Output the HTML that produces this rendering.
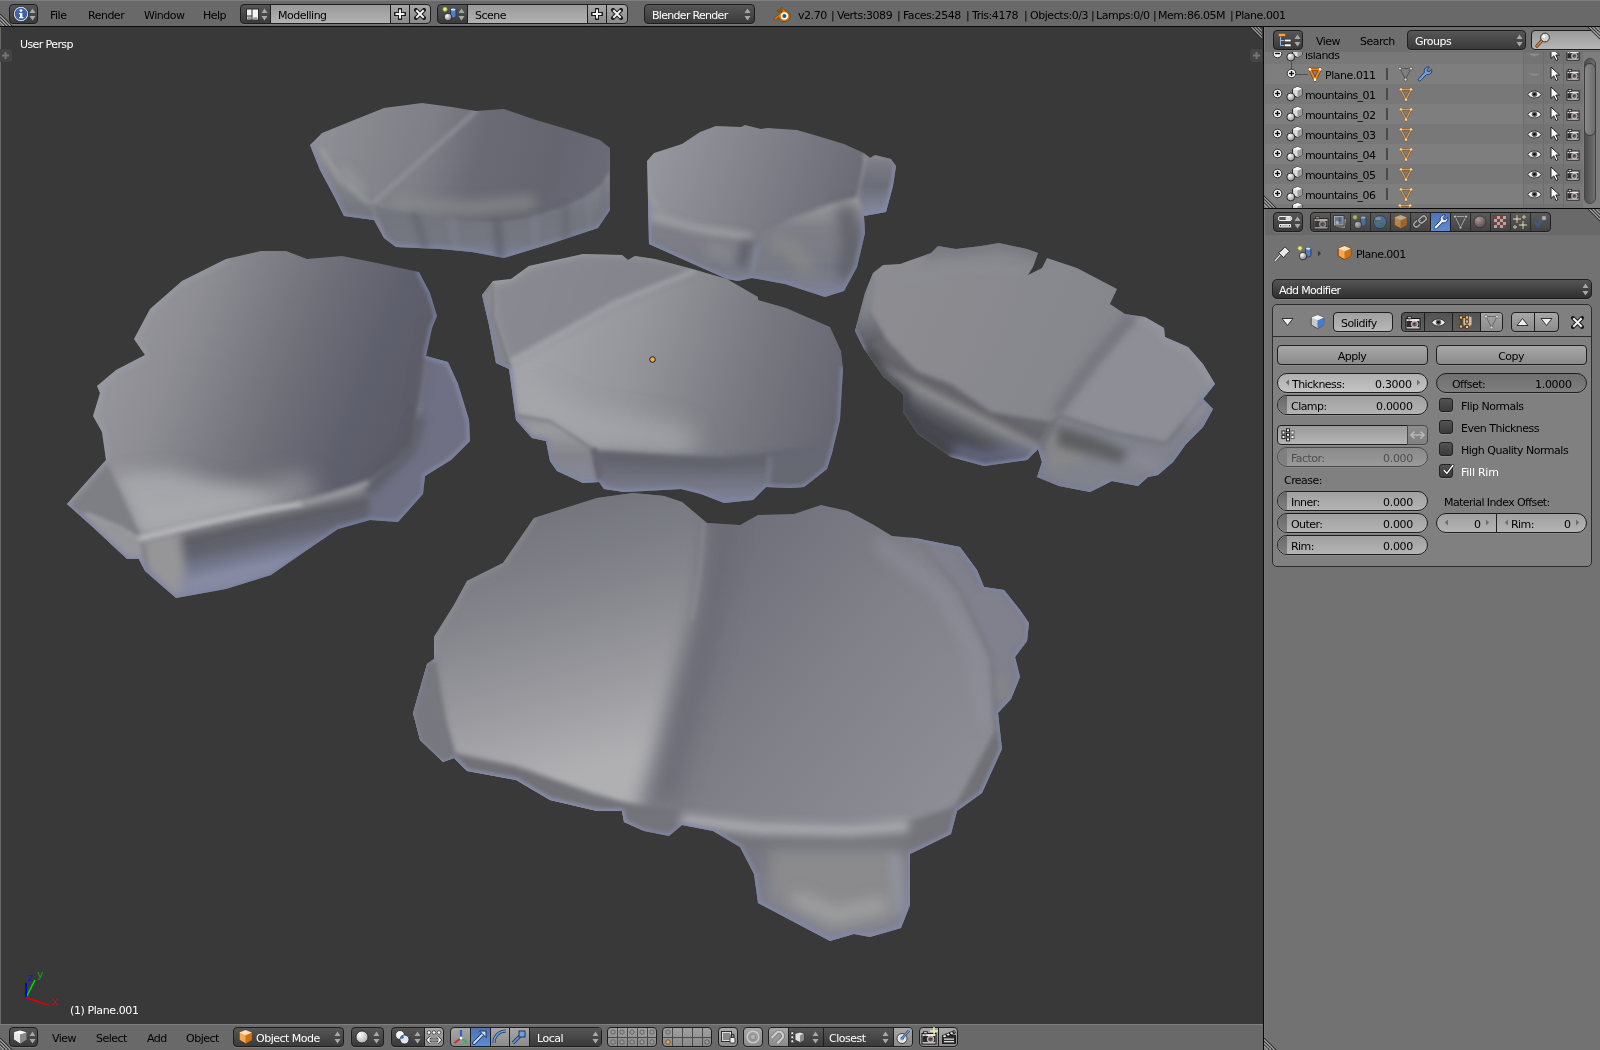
<!DOCTYPE html>
<html><head><meta charset="utf-8"><title>Blender</title>
<style>
html,body{margin:0;padding:0;}
body{width:1600px;height:1050px;overflow:hidden;background:#727272;position:relative;font-family:"DejaVu Sans","Liberation Sans",sans-serif;font-size:11px;color:#000;line-height:13px;}
div,span,svg{position:absolute;box-sizing:border-box;}
.t{white-space:nowrap;height:13px;will-change:transform;}
.w{color:#fff;}
.hdr{background:#696969;}
.btn{border:1px solid #1e1e1e;border-radius:4px;}
.dk{background:linear-gradient(#565656,#3a3a3a);}
.lt{background:linear-gradient(#a7a7a7,#8b8b8b);}
.tx{background:linear-gradient(#999999,#b2b2b2);}
.num{background:linear-gradient(#a0a0a0,#b4b4b4);border-radius:10px;}
.sel{background:linear-gradient(#4f4f4f,#5e5e5e);}
.blue{background:linear-gradient(#4d73ae,#5d8ad1);}
.chk{border:1px solid #222;border-radius:3px;background:linear-gradient(#535353,#3b3b3b);width:14px;height:14px;}
.emb{box-shadow:0 1px 0 rgba(255,255,255,0.10);}
.sep{background:#1e1e1e;width:1px;}
</style></head>
<body>
<svg style="left:0;top:27px" width="1263" height="997" viewBox="0 27 1263 997">
<defs>
<linearGradient id="g1s" gradientUnits="userSpaceOnUse" x1="0" y1="150" x2="0" y2="258"><stop offset="0" stop-color="#8e8f94"/><stop offset="0.32" stop-color="#80818a"/><stop offset="0.6" stop-color="#737580"/><stop offset="0.83" stop-color="#737682"/><stop offset="1" stop-color="#7c829c"/></linearGradient>
<linearGradient id="g1t" gradientUnits="userSpaceOnUse" x1="320" y1="100" x2="612" y2="180"><stop offset="0" stop-color="#90909a"/><stop offset="0.2" stop-color="#86878f"/><stop offset="0.38" stop-color="#7e7f89"/><stop offset="0.55" stop-color="#6a6b77"/><stop offset="0.8" stop-color="#646571"/><stop offset="1" stop-color="#6a6b7a"/></linearGradient>
<clipPath id="c1"><polygon points="310,145 322,133 354,120 384,108 422,103 452,107 476,111 504,109 536,120 570,130 600,140 610,148 610,210 598,228 550,244 504,258 472,252 440,249 396,247 384,238 374,220 344,216 334,196 320,170"/></clipPath>
<linearGradient id="g2s" gradientUnits="userSpaceOnUse" x1="0" y1="200" x2="0" y2="297"><stop offset="0" stop-color="#9c9da2"/><stop offset="0.3" stop-color="#7e7f89"/><stop offset="0.7" stop-color="#787a87"/><stop offset="1" stop-color="#7e829c"/></linearGradient>
<linearGradient id="g2b" gradientUnits="userSpaceOnUse" x1="0" y1="158" x2="0" y2="214"><stop offset="0" stop-color="#7e7f8a"/><stop offset="0.5" stop-color="#6b6d79"/><stop offset="1" stop-color="#858aa5"/></linearGradient>
<linearGradient id="g2t" gradientUnits="userSpaceOnUse" x1="647" y1="120" x2="870" y2="200"><stop offset="0" stop-color="#9a9ba3"/><stop offset="0.4" stop-color="#858690"/><stop offset="1" stop-color="#676874"/></linearGradient>
<clipPath id="c2"><polygon points="647,161 654,153 682,144 700,132 716,126 741,127 745,125 761,129 767,128 797,130 821,137 844,144 864,153 870,158 875,155 891,159 896,166 893,186 886,212 864,216 865,233 857,267 844,291 825,297 785,284 758,279 752,278 738,281 727,279 700,267 649,244 648,200"/></clipPath>
<linearGradient id="g3t" gradientUnits="userSpaceOnUse" x1="130" y1="300" x2="440" y2="420"><stop offset="0" stop-color="#96969d"/><stop offset="0.2" stop-color="#8c8c93"/><stop offset="0.3" stop-color="#83848d"/><stop offset="0.45" stop-color="#757680"/><stop offset="0.57" stop-color="#6b6c77"/><stop offset="0.75" stop-color="#5f6070"/><stop offset="1" stop-color="#585966"/></linearGradient>
<linearGradient id="g3s" gradientUnits="userSpaceOnUse" x1="200" y1="522" x2="212" y2="576"><stop offset="0" stop-color="#96969b"/><stop offset="0.28" stop-color="#5c5d67"/><stop offset="0.55" stop-color="#626473"/><stop offset="0.85" stop-color="#777c98"/><stop offset="1" stop-color="#858aa8"/></linearGradient>
<clipPath id="c3"><polygon points="67,504 106,460 102,432 93,416 100,393 97,386 116,370 145,355 134,339 150,309 182,281 226,259 261,251 286,251 307,259 342,256 377,263 419,272 430,293 437,316 432,328 426,356 448,362 458,384 469,420 470,441 451,460 425,476 423,494 398,522 370,520 338,529 307,550 271,575 226,589 176,598 145,571 139,559 127,559 95,529"/></clipPath>
<linearGradient id="g4t" gradientUnits="userSpaceOnUse" x1="500" y1="300" x2="845" y2="400"><stop offset="0" stop-color="#a9a9ae"/><stop offset="0.4" stop-color="#95969d"/><stop offset="0.75" stop-color="#767781"/><stop offset="1" stop-color="#656672"/></linearGradient>
<linearGradient id="g4l" gradientUnits="userSpaceOnUse" x1="0" y1="290" x2="0" y2="485"><stop offset="0" stop-color="#8c8c92"/><stop offset="0.45" stop-color="#828288"/><stop offset="0.62" stop-color="#8a8a90"/><stop offset="0.72" stop-color="#9a9aa0"/><stop offset="0.85" stop-color="#83848d"/><stop offset="1" stop-color="#868a9f"/></linearGradient>
<linearGradient id="g4s" gradientUnits="userSpaceOnUse" x1="0" y1="440" x2="0" y2="503"><stop offset="0" stop-color="#636470"/><stop offset="0.5" stop-color="#6b6d7a"/><stop offset="1" stop-color="#8085a0"/></linearGradient>
<clipPath id="c4"><polygon points="482,295 493,281 511,279 529,266 583,254 622,255 628,260 635,256 655,259 696,270 727,279 758,297 758,300 786,308 830,327 841,351 843,369 840,420 832,453 827,469 804,487 791,488 766,487 753,500 724,503 701,494 681,489 645,491 624,492 604,489 599,482 583,483 557,471 550,461 546,441 532,438 516,420 509,369 496,363 489,325"/></clipPath>
<linearGradient id="g5t" gradientUnits="userSpaceOnUse" x1="860" y1="260" x2="1215" y2="420"><stop offset="0" stop-color="#8d8d93"/><stop offset="0.3" stop-color="#8a8a90"/><stop offset="0.7" stop-color="#85868e"/><stop offset="1" stop-color="#8b8c98"/></linearGradient>
<linearGradient id="g5s" gradientUnits="userSpaceOnUse" x1="951" y1="384" x2="931" y2="424"><stop offset="0" stop-color="#68686e"/><stop offset="0.2" stop-color="#636369"/><stop offset="0.42" stop-color="#8c8c8f"/><stop offset="0.6" stop-color="#6e6f77"/><stop offset="0.8" stop-color="#56575f"/><stop offset="1" stop-color="#494a54"/></linearGradient>
<linearGradient id="g5l" gradientUnits="userSpaceOnUse" x1="0" y1="275" x2="0" y2="345"><stop offset="0" stop-color="#8e8f9a"/><stop offset="0.5" stop-color="#83848f"/><stop offset="0.85" stop-color="#666770"/><stop offset="1" stop-color="#5c5d66"/></linearGradient>
<clipPath id="c5"><polygon points="855,331 865,293 873,273 883,265 900,264 931,253 938,246 956,249 981,246 999,243 1027,249 1038,253 1033,267 1028,275 1042,268 1047,258 1077,268 1117,289 1110,304 1125,314 1145,317 1164,328 1165,337 1188,347 1203,364 1215,384 1203,399 1213,409 1203,427 1186,444 1173,462 1158,475 1148,477 1138,486 1112,481 1090,492 1059,486 1037,477 1042,462 1038,449 1027,460 984,466 951,457 918,434 903,412 903,394 883,376 864,349"/></clipPath>
<linearGradient id="g6t" gradientUnits="userSpaceOnUse" x1="700" y1="540" x2="980" y2="760"><stop offset="0" stop-color="#6c6d79"/><stop offset="0.5" stop-color="#7f808a"/><stop offset="1" stop-color="#8c8d97"/></linearGradient>
<linearGradient id="g6l" gradientUnits="userSpaceOnUse" x1="540" y1="500" x2="620" y2="790"><stop offset="0" stop-color="#72737d"/><stop offset="0.3" stop-color="#82838c"/><stop offset="0.6" stop-color="#97979d"/><stop offset="0.9" stop-color="#b0b0b4"/><stop offset="1" stop-color="#b0b0b4"/></linearGradient>
<linearGradient id="g6s" gradientUnits="userSpaceOnUse" x1="0" y1="770" x2="0" y2="941"><stop offset="0" stop-color="#707076"/><stop offset="0.4" stop-color="#74757d"/><stop offset="1" stop-color="#80839a"/></linearGradient>
<clipPath id="c6"><polygon points="413,713 427,664 434,659 434,637 454,605 467,581 503,563 534,518 597,498 633,493 664,496 682,502 707,523 740,525 758,515 794,514 821,505 848,511 874,525 892,536 915,538 960,547 977,570 984,587 1004,590 1020,610 1029,623 1027,641 1015,657 1020,677 1011,699 998,713 1002,749 982,793 957,811 951,834 910,854 910,905 901,928 870,937 854,934 830,941 758,903 754,874 740,847 713,831 682,825 669,836 644,831 624,822 622,811 597,811 550,800 516,780 467,771 454,758 443,762 420,740"/></clipPath>
<filter id="b1_5" filterUnits="userSpaceOnUse" x="0" y="27" width="1263" height="997"><feGaussianBlur stdDeviation="1.5"/></filter>
<filter id="b2" filterUnits="userSpaceOnUse" x="0" y="27" width="1263" height="997"><feGaussianBlur stdDeviation="2"/></filter>
<filter id="b2_5" filterUnits="userSpaceOnUse" x="0" y="27" width="1263" height="997"><feGaussianBlur stdDeviation="2.5"/></filter>
<filter id="b3" filterUnits="userSpaceOnUse" x="0" y="27" width="1263" height="997"><feGaussianBlur stdDeviation="3"/></filter>
<filter id="b3_5" filterUnits="userSpaceOnUse" x="0" y="27" width="1263" height="997"><feGaussianBlur stdDeviation="3.5"/></filter>
<filter id="b4" filterUnits="userSpaceOnUse" x="0" y="27" width="1263" height="997"><feGaussianBlur stdDeviation="4"/></filter>
<filter id="b4_5" filterUnits="userSpaceOnUse" x="0" y="27" width="1263" height="997"><feGaussianBlur stdDeviation="4.5"/></filter>
<filter id="b5" filterUnits="userSpaceOnUse" x="0" y="27" width="1263" height="997"><feGaussianBlur stdDeviation="5"/></filter>
<filter id="b6" filterUnits="userSpaceOnUse" x="0" y="27" width="1263" height="997"><feGaussianBlur stdDeviation="6"/></filter>
<filter id="b7" filterUnits="userSpaceOnUse" x="0" y="27" width="1263" height="997"><feGaussianBlur stdDeviation="7"/></filter>
<filter id="b9" filterUnits="userSpaceOnUse" x="0" y="27" width="1263" height="997"><feGaussianBlur stdDeviation="9"/></filter>
<filter id="b10" filterUnits="userSpaceOnUse" x="0" y="27" width="1263" height="997"><feGaussianBlur stdDeviation="10"/></filter>
<filter id="b12" filterUnits="userSpaceOnUse" x="0" y="27" width="1263" height="997"><feGaussianBlur stdDeviation="12"/></filter>
<filter id="desat" filterUnits="userSpaceOnUse" x="0" y="27" width="1263" height="997" color-interpolation-filters="sRGB"><feColorMatrix type="saturate" values="0.8"/></filter>
</defs>
<rect x="0" y="27" width="1263" height="997" fill="#393939"/>
<rect x="0" y="27" width="1" height="997" fill="#686868"/>
<g filter="url(#desat)">
<polygon points="310,145 322,133 354,120 384,108 422,103 452,107 476,111 504,109 536,120 570,130 600,140 610,148 610,210 598,228 550,244 504,258 472,252 440,249 396,247 384,238 374,220 344,216 334,196 320,170" fill="url(#g1t)"/>
<g clip-path="url(#c1)"><polyline points="476,111 372,204" fill="none" stroke="#94959c" stroke-width="4" stroke-linejoin="round" stroke-linecap="round" filter="url(#b2)" opacity="0.85"/><polyline points="345,172 360,190" fill="none" stroke="#9a9a9e" stroke-width="12" stroke-linejoin="round" stroke-linecap="round" filter="url(#b5)" opacity="0.6"/><polyline points="400,203 470,208 530,202" fill="none" stroke="#88888c" stroke-width="14" stroke-linejoin="round" stroke-linecap="round" filter="url(#b6)" opacity="0.8"/><polygon points="610,148 610,210 598,228 550,244 504,258 472,252 440,249 396,247 384,238 374,220 344,216 334,196 320,170 310,145 324,155 335,170 350,188 370,204 400,211 440,218 470,221 500,222 530,217 560,208 585,197 602,184 611,168" fill="url(#g1s)" filter="url(#b1_5)" /><polyline points="610,210 598,228 550,244 504,258 472,252 440,249 396,247 384,238 374,220 344,216 334,196 320,170 310,145" fill="none" stroke="#7f88b6" stroke-width="5" stroke-linejoin="round" stroke-linecap="round" filter="url(#b2)" opacity="0.8"/><polyline points="415,215 425,247" fill="none" stroke="#5e606c" stroke-width="7" stroke-linejoin="round" stroke-linecap="round" filter="url(#b3)" opacity="0.6"/><polyline points="452,220 456,250" fill="none" stroke="#7f8291" stroke-width="8" stroke-linejoin="round" stroke-linecap="round" filter="url(#b3)" opacity="0.6"/><polyline points="497,223 500,255" fill="none" stroke="#5c5e6a" stroke-width="8" stroke-linejoin="round" stroke-linecap="round" filter="url(#b3)" opacity="0.7"/><polyline points="535,217 535,247" fill="none" stroke="#7f8291" stroke-width="7" stroke-linejoin="round" stroke-linecap="round" filter="url(#b3)" opacity="0.6"/><polyline points="565,207 566,240" fill="none" stroke="#5e606c" stroke-width="6" stroke-linejoin="round" stroke-linecap="round" filter="url(#b3)" opacity="0.6"/><polyline points="588,196 590,232" fill="none" stroke="#7f8291" stroke-width="5" stroke-linejoin="round" stroke-linecap="round" filter="url(#b2_5)" opacity="0.5"/><polyline points="604,184 604,222" fill="none" stroke="#686a7c" stroke-width="5" stroke-linejoin="round" stroke-linecap="round" filter="url(#b2_5)" opacity="0.5"/><polyline points="372,206 384,238" fill="none" stroke="#8c8d92" stroke-width="4" stroke-linejoin="round" stroke-linecap="round" filter="url(#b2)" opacity="0.6"/><polyline points="322,150 340,180 368,203" fill="none" stroke="#a0a0a3" stroke-width="4" stroke-linejoin="round" stroke-linecap="round" filter="url(#b2_5)" opacity="0.8"/></g>
<polygon points="647,161 654,153 682,144 700,132 716,126 741,127 745,125 761,129 767,128 797,130 821,137 844,144 864,153 870,158 875,155 891,159 896,166 893,186 886,212 864,216 865,233 857,267 844,291 825,297 785,284 758,279 752,278 738,281 727,279 700,267 649,244 648,200" fill="url(#g2t)"/>
<g clip-path="url(#c2)"><polygon points="864,153 870,158 875,155 891,159 896,166 893,186 886,212 864,216 865,233 857,267 844,291 825,297 785,284 758,279 752,278 738,281 727,279 700,267 649,244 648,200 647,161 651,195 665,212 694,226 730,229 765,231 794,217 830,204 857,197 860,186 864,164" fill="url(#g2s)" filter="url(#b2)" /><polygon points="866,156 891,159 896,166 886,212 864,216 858,196" fill="url(#g2b)" filter="url(#b2)" /><polyline points="846,212 852,240 846,272" fill="none" stroke="#5d5e69" stroke-width="18" stroke-linejoin="round" stroke-linecap="round" filter="url(#b7)" opacity="0.9"/><polyline points="710,248 728,256" fill="none" stroke="#8e8e94" stroke-width="12" stroke-linejoin="round" stroke-linecap="round" filter="url(#b6)" opacity="0.7"/><polyline points="748,238 742,262" fill="none" stroke="#5a5b66" stroke-width="9" stroke-linejoin="round" stroke-linecap="round" filter="url(#b4)" opacity="0.9"/><polyline points="758,246 752,272" fill="none" stroke="#828aa6" stroke-width="4" stroke-linejoin="round" stroke-linecap="round" filter="url(#b2)" opacity="0.7"/><polyline points="778,242 796,252 806,266" fill="none" stroke="#8a8a88" stroke-width="16" stroke-linejoin="round" stroke-linecap="round" filter="url(#b7)" opacity="0.8"/><polyline points="652,216 697,229 750,236" fill="none" stroke="#a4a4a8" stroke-width="7" stroke-linejoin="round" stroke-linecap="round" filter="url(#b3_5)" opacity="0.9"/><polyline points="896,166 893,186 886,212 864,216 865,233 857,267 844,291 825,297 785,284 758,279 752,278 738,281 727,279 700,267 649,244 648,200" fill="none" stroke="#7f88b6" stroke-width="5" stroke-linejoin="round" stroke-linecap="round" filter="url(#b2)" opacity="0.8"/></g>
<polygon points="67,504 106,460 102,432 93,416 100,393 97,386 116,370 145,355 134,339 150,309 182,281 226,259 261,251 286,251 307,259 342,256 377,263 419,272 430,293 437,316 432,328 426,356 448,362 458,384 469,420 470,441 451,460 425,476 423,494 398,522 370,520 338,529 307,550 271,575 226,589 176,598 145,571 139,559 127,559 95,529" fill="url(#g3t)"/>
<g clip-path="url(#c3)"><polyline points="150,522 230,505 300,490" fill="none" stroke="#a3a4a9" stroke-width="30" stroke-linejoin="round" stroke-linecap="round" filter="url(#b12)" opacity="0.7"/><polygon points="141,540 112,475 170,470 250,490 290,505" fill="#b0b1b5" filter="url(#b9)" opacity="0.75" /><polygon points="426,356 448,362 458,384 469,420 470,441 451,460 425,476 423,494 398,522 370,520 338,529 307,550 271,575 226,589 176,598 145,571 139,559 127,559 95,529 67,504 106,460 106,460 141,537 200,524 260,511 300,504 345,490 367,483 395,462 412,445 420,400 426,356" fill="url(#g3s)" filter="url(#b2)" /><polygon points="426,356 448,362 458,384 469,420 470,441 451,460 425,476 423,494 398,522 370,520 367,483 395,462 412,445 420,400" fill="#6e7087" filter="url(#b3)" /><polyline points="418,420 410,448 392,466 370,488" fill="none" stroke="#595a64" stroke-width="12" stroke-linejoin="round" stroke-linecap="round" filter="url(#b5)" opacity="0.9"/><polyline points="430,330 424,356 418,400" fill="none" stroke="#5e5f6c" stroke-width="10" stroke-linejoin="round" stroke-linecap="round" filter="url(#b5)" opacity="0.6"/><polygon points="141,537 180,530 186,572 176,598 145,571" fill="#96969a" filter="url(#b5)" /><polygon points="67,504 106,460 141,537 145,571 127,559 95,529" fill="#7e7e86" filter="url(#b2)" /><polygon points="80,510 141,540 145,571 127,559 95,529" fill="#96979c" filter="url(#b2_5)" /><polyline points="88,515 120,528 140,540" fill="none" stroke="#a6a6a8" stroke-width="4" stroke-linejoin="round" stroke-linecap="round" filter="url(#b2)" opacity="0.8"/><polyline points="141,538 200,524 260,511 300,504" fill="none" stroke="#bdbdc1" stroke-width="5" stroke-linejoin="round" stroke-linecap="round" filter="url(#b2)" opacity="0.95"/><polyline points="300,504 345,491 367,483" fill="none" stroke="#a0a0a6" stroke-width="5" stroke-linejoin="round" stroke-linecap="round" filter="url(#b2_5)" opacity="0.8"/><polyline points="419,272 430,293 437,316 432,328 426,356 448,362 458,384 469,420 470,441 451,460 425,476 423,494 398,522 370,520 338,529 307,550 271,575 226,589 176,598 145,571 139,559 127,559 95,529 67,504" fill="none" stroke="#7f88b6" stroke-width="5" stroke-linejoin="round" stroke-linecap="round" filter="url(#b2)" opacity="0.8"/><polyline points="67,504 106,460 102,432 93,416 100,393 97,386 116,370 145,355 134,339 150,309 182,281 226,259" fill="none" stroke="#a2a4b2" stroke-width="6" stroke-linejoin="round" stroke-linecap="round" filter="url(#b3)" opacity="0.5"/></g>
<polygon points="482,295 493,281 511,279 529,266 583,254 622,255 628,260 635,256 655,259 696,270 727,279 758,297 758,300 786,308 830,327 841,351 843,369 840,420 832,453 827,469 804,487 791,488 766,487 753,500 724,503 701,494 681,489 645,491 624,492 604,489 599,482 583,483 557,471 550,461 546,441 532,438 516,420 509,369 496,363 489,325" fill="url(#g4t)"/>
<g clip-path="url(#c4)"><polyline points="530,400 580,425 680,440" fill="none" stroke="#a8a9ad" stroke-width="30" stroke-linejoin="round" stroke-linecap="round" filter="url(#b12)" opacity="0.8"/><polygon points="493,283 511,279 529,266 583,254 622,255 655,259 696,270 614,304 509,363 493,317" fill="#7c7d88" filter="url(#b5)" opacity="0.7" /><polyline points="509,363 614,304 694,271" fill="none" stroke="#aaabb1" stroke-width="4" stroke-linejoin="round" stroke-linecap="round" filter="url(#b2_5)" opacity="0.85"/><polygon points="840,420 832,453 827,469 804,487 791,488 766,487 753,500 724,503 701,494 681,489 645,491 624,492 604,489 599,482 583,483 557,471 550,461 546,441 532,438 516,420 509,369 496,363 489,325 482,295 493,281 493,283 493,317 509,363 516,415 550,421 590,447 600,451 670,455 720,457 770,453 820,445 840,430" fill="url(#g4s)" filter="url(#b2)" /><polyline points="603,457 670,462 720,464 768,460" fill="none" stroke="#5f606b" stroke-width="9" stroke-linejoin="round" stroke-linecap="round" filter="url(#b4)" opacity="0.8"/><polygon points="482,295 493,281 493,317 509,363 516,415 550,421 590,447 597,482 583,483 557,471 550,461 546,441 532,438 516,420 509,369 496,363 489,325" fill="url(#g4l)" filter="url(#b2)" /><polygon points="770,453 820,445 840,430 840,420 832,453 827,469 804,487 791,488 766,487" fill="#656774" filter="url(#b3)" /><polyline points="770,458 768,485" fill="none" stroke="#7b8096" stroke-width="5" stroke-linejoin="round" stroke-linecap="round" filter="url(#b2_5)" opacity="0.7"/><polyline points="595,450 600,485" fill="none" stroke="#62636f" stroke-width="4" stroke-linejoin="round" stroke-linecap="round" filter="url(#b1_5)" opacity="0.8"/><polyline points="843,369 840,420 832,453 827,469 804,487 791,488 766,487 753,500 724,503 701,494 681,489 645,491 624,492 604,489 599,482 583,483 557,471 550,461 546,441 532,438 516,420 509,369 496,363 489,325 482,295" fill="none" stroke="#7f88b6" stroke-width="5" stroke-linejoin="round" stroke-linecap="round" filter="url(#b2)" opacity="0.8"/></g>
<polygon points="855,331 865,293 873,273 883,265 900,264 931,253 938,246 956,249 981,246 999,243 1027,249 1038,253 1033,267 1028,275 1042,268 1047,258 1077,268 1117,289 1110,304 1125,314 1145,317 1164,328 1165,337 1188,347 1203,364 1215,384 1203,399 1213,409 1203,427 1186,444 1173,462 1158,475 1148,477 1138,486 1112,481 1090,492 1059,486 1037,477 1042,462 1038,449 1027,460 984,466 951,457 918,434 903,412 903,394 883,376 864,349" fill="url(#g5t)"/>
<g clip-path="url(#c5)"><polygon points="1059,415 1135,321 1125,314 1145,317 1164,328 1165,337 1188,347 1203,364 1215,384 1203,399 1166,443 1111,432" fill="#8d8e98" filter="url(#b2)" /><polyline points="1130,318 1094,360 1058,410" fill="none" stroke="#70717c" stroke-width="11" stroke-linejoin="round" stroke-linecap="round" filter="url(#b4_5)" opacity="0.75"/><polyline points="1145,317 1164,328 1165,337 1188,347 1203,364 1215,384" fill="none" stroke="#9c9eac" stroke-width="9" stroke-linejoin="round" stroke-linecap="round" filter="url(#b4)" opacity="0.6"/><polyline points="931,253 938,246 956,249 981,246 999,243 1027,249 1038,253" fill="none" stroke="#6c6d7b" stroke-width="14" stroke-linejoin="round" stroke-linecap="round" filter="url(#b6)" opacity="0.6"/><polyline points="890,285 960,268 1020,272" fill="none" stroke="#909198" stroke-width="5" stroke-linejoin="round" stroke-linecap="round" filter="url(#b3)" opacity="0.5"/><polygon points="1203,399 1213,409 1203,427 1186,444 1173,462 1158,475 1148,477 1138,486 1112,481 1090,492 1059,486 1037,477 1042,462 1038,449 1027,460 984,466 951,457 918,434 903,412 903,394 883,376 864,349 855,331 865,293 873,273 874,275 868,311 883,336 916,371 951,384 991,412 1052,422 1059,415 1111,432 1166,443 1203,399" fill="url(#g5s)" filter="url(#b2)" /><polygon points="855,331 865,293 873,273 876,275 870,311 884,337 866,350" fill="url(#g5l)" filter="url(#b2_5)" /><polygon points="1052,422 1059,415 1111,432 1166,443 1203,399 1213,409 1203,427 1186,444 1173,462 1158,475 1148,477 1138,486 1112,481 1090,492 1059,486 1037,477 1042,462 1038,449" fill="#80828e" filter="url(#b3)" /><polyline points="1053,424 1040,452" fill="none" stroke="#696a75" stroke-width="5" stroke-linejoin="round" stroke-linecap="round" filter="url(#b2_5)" opacity="0.8"/><polygon points="1050,436 1080,440 1085,462 1050,470" fill="#878788" filter="url(#b5)" /><polygon points="1058,426 1092,436 1128,452 1120,463 1085,453 1058,446" fill="#5e5e62" filter="url(#b4_5)" /><polyline points="1135,458 1160,468" fill="none" stroke="#8c8e9c" stroke-width="12" stroke-linejoin="round" stroke-linecap="round" filter="url(#b6)" opacity="0.7"/><polyline points="1190,420 1210,400" fill="none" stroke="#9496a6" stroke-width="10" stroke-linejoin="round" stroke-linecap="round" filter="url(#b5)" opacity="0.6"/><polyline points="958,452 984,458 1024,452" fill="none" stroke="#6c7296" stroke-width="14" stroke-linejoin="round" stroke-linecap="round" filter="url(#b6)" opacity="0.75"/><polyline points="1215,384 1203,399 1213,409 1203,427 1186,444 1173,462 1158,475 1148,477 1138,486 1112,481 1090,492 1059,486 1037,477 1042,462 1038,449 1027,460 984,466 951,457" fill="none" stroke="#7f88b6" stroke-width="5" stroke-linejoin="round" stroke-linecap="round" filter="url(#b2)" opacity="0.8"/><polyline points="870,355 883,376 903,394 903,412 918,434 945,453" fill="none" stroke="#42434c" stroke-width="13" stroke-linejoin="round" stroke-linecap="round" filter="url(#b5)" opacity="0.9"/><polyline points="864,349 855,331" fill="none" stroke="#7f88b6" stroke-width="4" stroke-linejoin="round" stroke-linecap="round" filter="url(#b2)" opacity="0.6"/></g>
<polygon points="413,713 427,664 434,659 434,637 454,605 467,581 503,563 534,518 597,498 633,493 664,496 682,502 707,523 740,525 758,515 794,514 821,505 848,511 874,525 892,536 915,538 960,547 977,570 984,587 1004,590 1020,610 1029,623 1027,641 1015,657 1020,677 1011,699 998,713 1002,749 982,793 957,811 951,834 910,854 910,905 901,928 870,937 854,934 830,941 758,903 754,874 740,847 713,831 682,825 669,836 644,831 624,822 622,811 597,811 550,800 516,780 467,771 454,758 443,762 420,740" fill="url(#g6t)"/>
<g clip-path="url(#c6)"><polyline points="720,530 712,600 700,660 684,720 668,790" fill="none" stroke="#696a76" stroke-width="26" stroke-linejoin="round" stroke-linecap="round" filter="url(#b10)" opacity="0.7"/><polygon points="380,470 708,470 706,523 702,560 694,610 682,650 668,700 652,760 640,800 630,870 380,870" fill="url(#g6l)" filter="url(#b9)" /><polyline points="704,523 699,580 692,620" fill="none" stroke="#9a9aa0" stroke-width="3" stroke-linejoin="round" stroke-linecap="round" filter="url(#b2)" opacity="0.5"/><polyline points="880,545 940,590 975,650 985,720" fill="none" stroke="#9293a0" stroke-width="14" stroke-linejoin="round" stroke-linecap="round" filter="url(#b7)" opacity="0.6"/><polygon points="915,538 960,547 977,570 984,587 1004,590 1020,610 1029,623 1027,641 1015,657 1020,677 1011,699 998,713 1002,749 982,793 957,811 951,834 910,854 910,905 901,928 870,937 854,934 830,941 758,903 754,874 740,847 713,831 682,825 669,836 644,831 624,822 622,811 597,811 550,800 516,780 467,771 454,758 443,762 420,740 413,713 427,664 434,659 434,659 445,722 454,753 516,766 592,793 624,802 678,811 758,820 848,822 915,820 955,807 995,731 991,659 960,592 915,538" fill="url(#g6s)" filter="url(#b2_5)" /><polygon points="915,538 960,547 977,570 984,587 1004,590 1020,610 1029,623 1027,641 1015,657 1020,677 1011,699 998,713 995,731 991,659 960,592" fill="#80818f" filter="url(#b4)" /><polyline points="966,556 980,580" fill="none" stroke="#74758a" stroke-width="10" stroke-linejoin="round" stroke-linecap="round" filter="url(#b5)" opacity="0.5"/><polyline points="1000,680 1006,700" fill="none" stroke="#8a8a82" stroke-width="8" stroke-linejoin="round" stroke-linecap="round" filter="url(#b4)" opacity="0.7"/><polyline points="686,820 760,828 850,830 904,826" fill="none" stroke="#b2b2b9" stroke-width="13" stroke-linejoin="round" stroke-linecap="round" filter="url(#b5)" opacity="0.85"/><polygon points="770,850 905,850 905,900 893,922 860,928 830,932 770,898" fill="#8b8b8e" filter="url(#b7)" /><polyline points="800,900 835,915 880,905" fill="none" stroke="#a4a4a6" stroke-width="16" stroke-linejoin="round" stroke-linecap="round" filter="url(#b7)" opacity="0.8"/><polyline points="895,860 900,910" fill="none" stroke="#9496a8" stroke-width="12" stroke-linejoin="round" stroke-linecap="round" filter="url(#b5)" opacity="0.7"/><polyline points="920,830 960,812" fill="none" stroke="#76777f" stroke-width="10" stroke-linejoin="round" stroke-linecap="round" filter="url(#b4)" opacity="0.6"/><polyline points="915,538 960,547 977,570 984,587 1004,590 1020,610 1029,623 1027,641 1015,657 1020,677 1011,699 998,713 1002,749 982,793 957,811 951,834 910,854 910,905 901,928 870,937 854,934 830,941 758,903 754,874 740,847 713,831 682,825 669,836 644,831 624,822 622,811 597,811 550,800 516,780 467,771 454,758 443,762 420,740 413,713 427,664 434,659" fill="none" stroke="#7f88b6" stroke-width="5" stroke-linejoin="round" stroke-linecap="round" filter="url(#b2)" opacity="0.8"/><polyline points="434,659 434,637 454,605 467,581 503,563 534,518" fill="none" stroke="#9a9aa2" stroke-width="5" stroke-linejoin="round" stroke-linecap="round" filter="url(#b3)" opacity="0.5"/><polygon points="413,713 427,664 434,659 445,722 454,753 443,762 420,740" fill="#787982" filter="url(#b3)" opacity="0.95" /></g>
</g>
</svg>
<div class="hdr" style="left:0px;top:0px;width:1600px;height:26px;background:linear-gradient(#808080 0,#7e7e7e 1px,#696969 1px);"></div>
<div class="" style="left:0px;top:26px;width:1600px;height:1px;background:#0a0a0a;"></div>
<svg style="left:0px;top:13px;" width="13" height="13" viewBox="0 0 12 12"><path d="M0 1L11 12M0 4L8 12M0 7L5 12" stroke="#2b2b2b" stroke-width="1.1" fill="none"/><path d="M0 2.3L9.7 12M0 5.3L6.7 12M0 8.3L3.7 12" stroke="#a0a0a0" stroke-width="1.1" fill="none"/></svg>
<div class="btn dk emb" style="left:9px;top:4px;width:29px;height:20px;"></div>
<svg style="left:13px;top:6px" width="16" height="16" viewBox="0 0 16 16"><circle cx="8" cy="8" r="6.8" fill="#3d62a6" stroke="#dfe6f2" stroke-width="1.2"/><circle cx="8" cy="8" r="7.6" fill="none" stroke="#1b2a48" stroke-width="0.7"/><rect x="7" y="7" width="2.4" height="5" fill="#fff"/><rect x="6" y="7" width="2" height="1.2" fill="#fff"/><rect x="6" y="11" width="4.4" height="1.2" fill="#fff"/><circle cx="8" cy="4.6" r="1.4" fill="#fff"/></svg>
<svg style="left:29px;top:8px" width="7" height="13" viewBox="0 0 7 13"><path d="M3.5 0.5L6.5 5H0.5Z M3.5 12.5L6.5 8H0.5Z" fill="#a8a8a8"/></svg>
<span class="t " style="left:50px;top:9px;letter-spacing:-0.5px;">File</span>
<span class="t " style="left:88px;top:9px;letter-spacing:-0.5px;">Render</span>
<span class="t " style="left:144px;top:9px;letter-spacing:-0.5px;">Window</span>
<span class="t " style="left:203px;top:9px;letter-spacing:-0.5px;">Help</span>
<div class="btn dk emb" style="left:240px;top:4px;width:31px;height:20px;border-radius:4px 0 0 4px;"></div>
<svg style="left:245px;top:7px" width="15" height="15" viewBox="0 0 15 15"><rect x="1" y="1.5" width="13" height="12" fill="#2a2a2a"/><rect x="2" y="2.5" width="4.5" height="6" fill="#f0f0f0"/><rect x="2" y="9.5" width="4.5" height="3" fill="#d8d8d8"/><rect x="7.5" y="2.5" width="5.5" height="10" fill="#f4f4f4"/><rect x="2.7" y="10.6" width="3" height="1" fill="#555"/><rect x="8.3" y="10.6" width="4" height="1" fill="#555"/></svg>
<svg style="left:261px;top:8px" width="7" height="13" viewBox="0 0 7 13"><path d="M3.5 0.5L6.5 5H0.5Z M3.5 12.5L6.5 8H0.5Z" fill="#a8a8a8"/></svg>
<div class="btn tx emb" style="left:270px;top:4px;width:121px;height:20px;border-radius:0;"></div>
<span class="t " style="left:278px;top:9px;letter-spacing:-0.5px;">Modelling</span>
<div class="btn lt emb" style="left:390px;top:4px;width:20px;height:20px;border-radius:0;"></div>
<svg style="left:394px;top:8px" width="12" height="12" viewBox="0 0 12 12"><path d="M6 1V11M1 6H11" stroke="#1a1a1a" stroke-width="4" stroke-linecap="round"/><path d="M6 1.5V10.5M1.5 6H10.5" stroke="#f2f2f2" stroke-width="2"/></svg>
<div class="btn lt emb" style="left:409px;top:4px;width:22px;height:20px;border-radius:0 4px 4px 0;"></div>
<svg style="left:414px;top:8px" width="12" height="12" viewBox="0 0 12 12"><path d="M2 2L10 10M10 2L2 10" stroke="#1a1a1a" stroke-width="4" stroke-linecap="round"/><path d="M2.3 2.3L9.7 9.7M9.7 2.3L2.3 9.7" stroke="#f2f2f2" stroke-width="2"/></svg>
<div class="btn dk emb" style="left:437px;top:4px;width:31px;height:20px;border-radius:4px 0 0 4px;"></div>
<svg style="left:442px;top:6px" width="16" height="16" viewBox="0 0 16 16"><defs><radialGradient id="sg442" cx="0.35" cy="0.35" r="0.7"><stop offset="0" stop-color="#fff"/><stop offset="1" stop-color="#777"/></radialGradient></defs><rect x="8.5" y="2.5" width="5.5" height="9.5" rx="2.2" fill="#4f7fc4" stroke="#1c3256" stroke-width="0.8"/><ellipse cx="11.2" cy="3.6" rx="2.4" ry="1.1" fill="#d5e3f6"/><circle cx="6" cy="11" r="3.8" fill="url(#sg442)" stroke="#222" stroke-width="0.8"/><circle cx="3" cy="3.2" r="2.2" fill="#e9f07a" stroke="#7f8a2a" stroke-width="0.7"/></svg>
<svg style="left:458px;top:8px" width="7" height="13" viewBox="0 0 7 13"><path d="M3.5 0.5L6.5 5H0.5Z M3.5 12.5L6.5 8H0.5Z" fill="#a8a8a8"/></svg>
<div class="btn tx emb" style="left:467px;top:4px;width:121px;height:20px;border-radius:0;"></div>
<span class="t " style="left:475px;top:9px;letter-spacing:-0.5px;">Scene</span>
<div class="btn lt emb" style="left:587px;top:4px;width:20px;height:20px;border-radius:0;"></div>
<svg style="left:591px;top:8px" width="12" height="12" viewBox="0 0 12 12"><path d="M6 1V11M1 6H11" stroke="#1a1a1a" stroke-width="4" stroke-linecap="round"/><path d="M6 1.5V10.5M1.5 6H10.5" stroke="#f2f2f2" stroke-width="2"/></svg>
<div class="btn lt emb" style="left:606px;top:4px;width:22px;height:20px;border-radius:0 4px 4px 0;"></div>
<svg style="left:611px;top:8px" width="12" height="12" viewBox="0 0 12 12"><path d="M2 2L10 10M10 2L2 10" stroke="#1a1a1a" stroke-width="4" stroke-linecap="round"/><path d="M2.3 2.3L9.7 9.7M9.7 2.3L2.3 9.7" stroke="#f2f2f2" stroke-width="2"/></svg>
<div class="btn dk emb" style="left:644px;top:4px;width:111px;height:20px;"></div>
<span class="t w" style="left:652px;top:9px;letter-spacing:-0.7px;">Blender Render</span>
<svg style="left:744px;top:8px" width="7" height="13" viewBox="0 0 7 13"><path d="M3.5 0.5L6.5 5H0.5Z M3.5 12.5L6.5 8H0.5Z" fill="#a8a8a8"/></svg>
<svg style="left:773px;top:6px" width="18" height="17" viewBox="0 0 18 17"><path d="M1.2 12.2L9.3 5.6H4.6C3.6 5.6 3.6 4.2 4.6 4.2H9.6L8.3 3.1C7.5 2.4 8.5 1.3 9.3 2L15.5 7.2C17.6 9.2 17.3 12.4 15 14.2C12.6 16 9.1 15.8 7.2 13.9C6.4 13.1 6 12.2 6 11.3L3 13.7C1.9 14.5 0.4 13 1.2 12.2Z" fill="#ea7600" stroke="#5a2d00" stroke-width="0.6"/><circle cx="11.4" cy="10" r="3.7" fill="#fff"/><circle cx="11.4" cy="10" r="2.1" fill="#265787"/></svg>
<span class="t " style="left:798.3px;top:9px;letter-spacing:-0.45px;">v2.70</span>
<span class="t " style="left:830.8px;top:9px;letter-spacing:-0.45px;">|</span>
<span class="t " style="left:837.0999999999999px;top:9px;letter-spacing:-0.45px;">Verts:3089</span>
<span class="t " style="left:896.5px;top:9px;letter-spacing:-0.45px;">|</span>
<span class="t " style="left:903.1999999999999px;top:9px;letter-spacing:-0.45px;">Faces:2548</span>
<span class="t " style="left:965.8px;top:9px;letter-spacing:-0.45px;">|</span>
<span class="t " style="left:972.0999999999999px;top:9px;letter-spacing:-0.45px;">Tris:4178</span>
<span class="t " style="left:1023.8px;top:9px;letter-spacing:-0.45px;">|</span>
<span class="t " style="left:1029.8px;top:9px;letter-spacing:-0.45px;">Objects:0/3</span>
<span class="t " style="left:1091.2px;top:9px;letter-spacing:-0.45px;">|</span>
<span class="t " style="left:1096.3px;top:9px;letter-spacing:-0.45px;">Lamps:0/0</span>
<span class="t " style="left:1152.8px;top:9px;letter-spacing:-0.45px;">|</span>
<span class="t " style="left:1158.1px;top:9px;letter-spacing:-0.45px;">Mem:86.05M</span>
<span class="t " style="left:1229.6px;top:9px;letter-spacing:-0.45px;">|</span>
<span class="t " style="left:1235.3px;top:9px;letter-spacing:-0.45px;">Plane.001</span>
<div class="" style="left:1263px;top:27px;width:1px;height:1023px;background:#0a0a0a;"></div>
<div class="" style="left:1264px;top:27px;width:1px;height:1023px;background:#7c7c7c;"></div>
<div class="" style="left:1265px;top:52px;width:335px;height:156px;background:#7e7e7e;overflow:hidden;"></div>
<div class="" style="left:1265px;top:52px;width:318px;height:12px;background:#787878;"></div>
<div class="" style="left:1265px;top:64px;width:318px;height:20px;background:#7e7e7e;"></div>
<div class="" style="left:1265px;top:84px;width:318px;height:20px;background:#787878;"></div>
<div class="" style="left:1265px;top:104px;width:318px;height:20px;background:#7e7e7e;"></div>
<div class="" style="left:1265px;top:124px;width:318px;height:20px;background:#787878;"></div>
<div class="" style="left:1265px;top:144px;width:318px;height:20px;background:#7e7e7e;"></div>
<div class="" style="left:1265px;top:164px;width:318px;height:20px;background:#787878;"></div>
<div class="" style="left:1265px;top:184px;width:318px;height:20px;background:#7e7e7e;"></div>
<div class="" style="left:1265px;top:204px;width:318px;height:4px;background:#787878;"></div>
<div class="" style="left:1523px;top:52px;width:60px;height:156px;background:rgba(0,0,0,0.035);"></div>
<div class="" style="left:1523px;top:52px;width:1px;height:156px;background:#6c6c6c;"></div>
<div class="" style="left:1543px;top:52px;width:1px;height:156px;background:#6c6c6c;"></div>
<div class="" style="left:1563px;top:52px;width:1px;height:156px;background:#6c6c6c;"></div>
<div class="" style="left:1583px;top:52px;width:17px;height:156px;background:#7e7e7e;"></div>
<div class="" style="left:1584px;top:58px;width:12px;height:146px;background:linear-gradient(90deg,#4e4e4e,#707070);border-radius:6px;border:1px solid #444;"></div>
<div class="" style="left:1584px;top:63px;width:12px;height:73px;background:linear-gradient(90deg,#8a8a8a,#6c6c6c);border-radius:6px;border:1px solid #3c3c3c;"></div>
<svg style="left:1272px;top:48px" width="11" height="11" viewBox="0 0 11 11"><circle cx="5.5" cy="5.5" r="4.3" fill="#f2f2f2" stroke="#222" stroke-width="0.9"/><path d="M3 5.5H8" stroke="#111" stroke-width="1.4"/></svg>
<svg style="left:1286px;top:46px" width="17" height="16" viewBox="0 0 17 16"><defs><radialGradient id="gg1286_46" cx="0.35" cy="0.3" r="0.75"><stop offset="0" stop-color="#fff"/><stop offset="1" stop-color="#8f8f8f"/></radialGradient></defs><path d="M6.5 3L11.5 0.8L16 2.6V9L11.5 11.5L6.5 9.4Z" fill="#dcdcdc" stroke="#1e1e1e" stroke-width="0.9"/><path d="M11.5 4.6V11.5L16 9V2.6Z" fill="#9c9c9c"/><path d="M6.5 3L11.5 4.6L16 2.6L11.5 0.8Z" fill="#f6f6f6"/><circle cx="4.8" cy="11" r="4" fill="url(#gg1286_46)" stroke="#1e1e1e" stroke-width="0.9"/></svg>
<span class="t " style="left:1305px;top:49px;letter-spacing:-0.55px;">islands</span>
<svg style="left:1527px;top:47px" width="15" height="15" viewBox="0 0 15 15"><path d="M1.5 6.5C4 10.5 11 10.5 13.5 6.5" fill="#8a8a8a" stroke="#767676" stroke-width="1"/></svg>
<svg style="left:1548px;top:46px" width="14" height="16" viewBox="0 0 14 16"><path d="M3 1L3 12.5L5.8 9.8L8 14.5L10 13.6L7.8 9L11.5 9Z" fill="#fff" stroke="#111" stroke-width="0.9" stroke-linejoin="round"/></svg>
<svg style="left:1566px;top:48px" width="14" height="13" viewBox="0 0 16 15"><rect x="1" y="3.5" width="14" height="10.5" fill="#e8e8e8" stroke="#111" stroke-width="1"/><rect x="1.5" y="6" width="13" height="6.2" fill="#2a2a2a"/><rect x="2.5" y="1.8" width="4" height="2" fill="#ddd" stroke="#111" stroke-width="0.8"/><circle cx="9.6" cy="9.2" r="3.3" fill="#8a8a8a" stroke="#ddd" stroke-width="0.8"/><circle cx="9.6" cy="9.2" r="1.8" fill="#7a2a2a"/><circle cx="10.3" cy="9.8" r="0.9" fill="#4a6fb0"/><circle cx="4" cy="5" r="0.7" fill="#e02020"/></svg>
<div class="" style="left:1291px;top:62px;width:1px;height:12px;background:#4e4e4e;"></div>
<div class="" style="left:1296px;top:74px;width:12px;height:1px;background:#4e4e4e;"></div>
<svg style="left:1286px;top:68px" width="11" height="11" viewBox="0 0 11 11"><circle cx="5.5" cy="5.5" r="4.3" fill="#f2f2f2" stroke="#222" stroke-width="0.9"/><path d="M3 5.5H8" stroke="#111" stroke-width="1.4"/><path d="M5.5 3V8" stroke="#111" stroke-width="1.4"/></svg>
<svg style="left:1307.5px;top:67px" width="14" height="15" viewBox="0 0 15 16"><path d="M2 2.5H13L7.5 13.5Z" fill="none" stroke="#7a3d00" stroke-width="3.4"/><path d="M2 2.5H13L7.5 13.5Z" fill="none" stroke="#f08a1c" stroke-width="2"/><circle cx="2" cy="2.5" r="1.4" fill="#fff"/><circle cx="13" cy="2.5" r="1.4" fill="#fff"/><circle cx="7.5" cy="13.5" r="1.4" fill="#fff"/></svg>
<span class="t " style="left:1325px;top:69px;letter-spacing:-0.45px;">Plane.011</span>
<div class="" style="left:1386px;top:68px;width:2px;height:12px;background:#4a4a4a;"></div>
<svg style="left:1398px;top:66px" width="15" height="16" viewBox="0 0 15 16"><path d="M2 2.5H13L7.5 13.5Z" fill="none" stroke="#555" stroke-width="1"/><circle cx="2" cy="2.5" r="1.5" fill="#ddd" stroke="#333" stroke-width="0.6"/><circle cx="13" cy="2.5" r="1.5" fill="#ddd" stroke="#333" stroke-width="0.6"/><circle cx="7.5" cy="13.5" r="1.5" fill="#ddd" stroke="#333" stroke-width="0.6"/></svg>
<svg style="left:1417px;top:66px" width="16" height="16" viewBox="0 0 16 16"><path d="M2.2 13.8L8.2 7.4C7.4 5.2 8.6 2.6 11 2C12 1.8 12.6 1.9 13.2 2.1L10.7 4.7L11.3 6.3L13 6.8L15.4 4.4C15.9 6 15.4 7.9 14 8.9C12.9 9.7 11.6 9.8 10.4 9.4L4.3 15.8C3.2 16.8 1.2 15 2.2 13.8Z" fill="#6f9fe0" stroke="#1d3558" stroke-width="0.9" transform="translate(-0.8,-1)"/></svg>
<svg style="left:1527px;top:67px" width="15" height="15" viewBox="0 0 15 15"><path d="M1.5 6.5C4 10.5 11 10.5 13.5 6.5" fill="#8a8a8a" stroke="#767676" stroke-width="1"/></svg>
<svg style="left:1548px;top:66px" width="14" height="16" viewBox="0 0 14 16"><path d="M3 1L3 12.5L5.8 9.8L8 14.5L10 13.6L7.8 9L11.5 9Z" fill="#fff" stroke="#111" stroke-width="0.9" stroke-linejoin="round"/></svg>
<svg style="left:1566px;top:68px" width="14" height="13" viewBox="0 0 16 15"><rect x="1" y="3.5" width="14" height="10.5" fill="#e8e8e8" stroke="#111" stroke-width="1"/><rect x="1.5" y="6" width="13" height="6.2" fill="#2a2a2a"/><rect x="2.5" y="1.8" width="4" height="2" fill="#ddd" stroke="#111" stroke-width="0.8"/><circle cx="9.6" cy="9.2" r="3.3" fill="#8a8a8a" stroke="#ddd" stroke-width="0.8"/><circle cx="9.6" cy="9.2" r="1.8" fill="#7a2a2a"/><circle cx="10.3" cy="9.8" r="0.9" fill="#4a6fb0"/><circle cx="4" cy="5" r="0.7" fill="#e02020"/></svg>
<svg style="left:1272px;top:88px" width="11" height="11" viewBox="0 0 11 11"><circle cx="5.5" cy="5.5" r="4.3" fill="#f2f2f2" stroke="#222" stroke-width="0.9"/><path d="M3 5.5H8" stroke="#111" stroke-width="1.4"/><path d="M5.5 3V8" stroke="#111" stroke-width="1.4"/></svg>
<svg style="left:1286px;top:86px" width="17" height="16" viewBox="0 0 17 16"><defs><radialGradient id="gg1286_86" cx="0.35" cy="0.3" r="0.75"><stop offset="0" stop-color="#fff"/><stop offset="1" stop-color="#8f8f8f"/></radialGradient></defs><path d="M6.5 3L11.5 0.8L16 2.6V9L11.5 11.5L6.5 9.4Z" fill="#dcdcdc" stroke="#1e1e1e" stroke-width="0.9"/><path d="M11.5 4.6V11.5L16 9V2.6Z" fill="#9c9c9c"/><path d="M6.5 3L11.5 4.6L16 2.6L11.5 0.8Z" fill="#f6f6f6"/><circle cx="4.8" cy="11" r="4" fill="url(#gg1286_86)" stroke="#1e1e1e" stroke-width="0.9"/></svg>
<span class="t " style="left:1305px;top:89px;letter-spacing:-0.62px;">mountains_01</span>
<div class="" style="left:1386px;top:88px;width:2px;height:12px;background:#4a4a4a;"></div>
<svg style="left:1398.5px;top:87px" width="14" height="15" viewBox="0 0 15 16"><path d="M2 2.5H13L7.5 13.5Z" fill="none" stroke="#7c5326" stroke-width="2.5"/><path d="M2 2.5H13L7.5 13.5Z" fill="none" stroke="#cf9a62" stroke-width="1.4"/><circle cx="2" cy="2.5" r="1.3" fill="#f4d9b4"/><circle cx="13" cy="2.5" r="1.3" fill="#f4d9b4"/><circle cx="7.5" cy="13.5" r="1.3" fill="#f4d9b4"/></svg>
<svg style="left:1527px;top:87px" width="15" height="15" viewBox="0 0 15 15"><path d="M0.8 7.5C3.5 2.8 11.5 2.8 14.2 7.5C11.5 12 3.5 12 0.8 7.5Z" fill="#f2f2f2" stroke="#2a2a2a" stroke-width="0.9"/><circle cx="7.5" cy="7.2" r="2.7" fill="#5b5b5b"/><circle cx="7.5" cy="7.2" r="1.3" fill="#151515"/></svg>
<svg style="left:1548px;top:86px" width="14" height="16" viewBox="0 0 14 16"><path d="M3 1L3 12.5L5.8 9.8L8 14.5L10 13.6L7.8 9L11.5 9Z" fill="#fff" stroke="#111" stroke-width="0.9" stroke-linejoin="round"/></svg>
<svg style="left:1566px;top:88px" width="14" height="13" viewBox="0 0 16 15"><rect x="1" y="3.5" width="14" height="10.5" fill="#e8e8e8" stroke="#111" stroke-width="1"/><rect x="1.5" y="6" width="13" height="6.2" fill="#2a2a2a"/><rect x="2.5" y="1.8" width="4" height="2" fill="#ddd" stroke="#111" stroke-width="0.8"/><circle cx="9.6" cy="9.2" r="3.3" fill="#8a8a8a" stroke="#ddd" stroke-width="0.8"/><circle cx="9.6" cy="9.2" r="1.8" fill="#7a2a2a"/><circle cx="10.3" cy="9.8" r="0.9" fill="#4a6fb0"/><circle cx="4" cy="5" r="0.7" fill="#e02020"/></svg>
<svg style="left:1272px;top:108px" width="11" height="11" viewBox="0 0 11 11"><circle cx="5.5" cy="5.5" r="4.3" fill="#f2f2f2" stroke="#222" stroke-width="0.9"/><path d="M3 5.5H8" stroke="#111" stroke-width="1.4"/><path d="M5.5 3V8" stroke="#111" stroke-width="1.4"/></svg>
<svg style="left:1286px;top:106px" width="17" height="16" viewBox="0 0 17 16"><defs><radialGradient id="gg1286_106" cx="0.35" cy="0.3" r="0.75"><stop offset="0" stop-color="#fff"/><stop offset="1" stop-color="#8f8f8f"/></radialGradient></defs><path d="M6.5 3L11.5 0.8L16 2.6V9L11.5 11.5L6.5 9.4Z" fill="#dcdcdc" stroke="#1e1e1e" stroke-width="0.9"/><path d="M11.5 4.6V11.5L16 9V2.6Z" fill="#9c9c9c"/><path d="M6.5 3L11.5 4.6L16 2.6L11.5 0.8Z" fill="#f6f6f6"/><circle cx="4.8" cy="11" r="4" fill="url(#gg1286_106)" stroke="#1e1e1e" stroke-width="0.9"/></svg>
<span class="t " style="left:1305px;top:109px;letter-spacing:-0.62px;">mountains_02</span>
<div class="" style="left:1386px;top:108px;width:2px;height:12px;background:#4a4a4a;"></div>
<svg style="left:1398.5px;top:107px" width="14" height="15" viewBox="0 0 15 16"><path d="M2 2.5H13L7.5 13.5Z" fill="none" stroke="#7c5326" stroke-width="2.5"/><path d="M2 2.5H13L7.5 13.5Z" fill="none" stroke="#cf9a62" stroke-width="1.4"/><circle cx="2" cy="2.5" r="1.3" fill="#f4d9b4"/><circle cx="13" cy="2.5" r="1.3" fill="#f4d9b4"/><circle cx="7.5" cy="13.5" r="1.3" fill="#f4d9b4"/></svg>
<svg style="left:1527px;top:107px" width="15" height="15" viewBox="0 0 15 15"><path d="M0.8 7.5C3.5 2.8 11.5 2.8 14.2 7.5C11.5 12 3.5 12 0.8 7.5Z" fill="#f2f2f2" stroke="#2a2a2a" stroke-width="0.9"/><circle cx="7.5" cy="7.2" r="2.7" fill="#5b5b5b"/><circle cx="7.5" cy="7.2" r="1.3" fill="#151515"/></svg>
<svg style="left:1548px;top:106px" width="14" height="16" viewBox="0 0 14 16"><path d="M3 1L3 12.5L5.8 9.8L8 14.5L10 13.6L7.8 9L11.5 9Z" fill="#fff" stroke="#111" stroke-width="0.9" stroke-linejoin="round"/></svg>
<svg style="left:1566px;top:108px" width="14" height="13" viewBox="0 0 16 15"><rect x="1" y="3.5" width="14" height="10.5" fill="#e8e8e8" stroke="#111" stroke-width="1"/><rect x="1.5" y="6" width="13" height="6.2" fill="#2a2a2a"/><rect x="2.5" y="1.8" width="4" height="2" fill="#ddd" stroke="#111" stroke-width="0.8"/><circle cx="9.6" cy="9.2" r="3.3" fill="#8a8a8a" stroke="#ddd" stroke-width="0.8"/><circle cx="9.6" cy="9.2" r="1.8" fill="#7a2a2a"/><circle cx="10.3" cy="9.8" r="0.9" fill="#4a6fb0"/><circle cx="4" cy="5" r="0.7" fill="#e02020"/></svg>
<svg style="left:1272px;top:128px" width="11" height="11" viewBox="0 0 11 11"><circle cx="5.5" cy="5.5" r="4.3" fill="#f2f2f2" stroke="#222" stroke-width="0.9"/><path d="M3 5.5H8" stroke="#111" stroke-width="1.4"/><path d="M5.5 3V8" stroke="#111" stroke-width="1.4"/></svg>
<svg style="left:1286px;top:126px" width="17" height="16" viewBox="0 0 17 16"><defs><radialGradient id="gg1286_126" cx="0.35" cy="0.3" r="0.75"><stop offset="0" stop-color="#fff"/><stop offset="1" stop-color="#8f8f8f"/></radialGradient></defs><path d="M6.5 3L11.5 0.8L16 2.6V9L11.5 11.5L6.5 9.4Z" fill="#dcdcdc" stroke="#1e1e1e" stroke-width="0.9"/><path d="M11.5 4.6V11.5L16 9V2.6Z" fill="#9c9c9c"/><path d="M6.5 3L11.5 4.6L16 2.6L11.5 0.8Z" fill="#f6f6f6"/><circle cx="4.8" cy="11" r="4" fill="url(#gg1286_126)" stroke="#1e1e1e" stroke-width="0.9"/></svg>
<span class="t " style="left:1305px;top:129px;letter-spacing:-0.62px;">mountains_03</span>
<div class="" style="left:1386px;top:128px;width:2px;height:12px;background:#4a4a4a;"></div>
<svg style="left:1398.5px;top:127px" width="14" height="15" viewBox="0 0 15 16"><path d="M2 2.5H13L7.5 13.5Z" fill="none" stroke="#7c5326" stroke-width="2.5"/><path d="M2 2.5H13L7.5 13.5Z" fill="none" stroke="#cf9a62" stroke-width="1.4"/><circle cx="2" cy="2.5" r="1.3" fill="#f4d9b4"/><circle cx="13" cy="2.5" r="1.3" fill="#f4d9b4"/><circle cx="7.5" cy="13.5" r="1.3" fill="#f4d9b4"/></svg>
<svg style="left:1527px;top:127px" width="15" height="15" viewBox="0 0 15 15"><path d="M0.8 7.5C3.5 2.8 11.5 2.8 14.2 7.5C11.5 12 3.5 12 0.8 7.5Z" fill="#f2f2f2" stroke="#2a2a2a" stroke-width="0.9"/><circle cx="7.5" cy="7.2" r="2.7" fill="#5b5b5b"/><circle cx="7.5" cy="7.2" r="1.3" fill="#151515"/></svg>
<svg style="left:1548px;top:126px" width="14" height="16" viewBox="0 0 14 16"><path d="M3 1L3 12.5L5.8 9.8L8 14.5L10 13.6L7.8 9L11.5 9Z" fill="#fff" stroke="#111" stroke-width="0.9" stroke-linejoin="round"/></svg>
<svg style="left:1566px;top:128px" width="14" height="13" viewBox="0 0 16 15"><rect x="1" y="3.5" width="14" height="10.5" fill="#e8e8e8" stroke="#111" stroke-width="1"/><rect x="1.5" y="6" width="13" height="6.2" fill="#2a2a2a"/><rect x="2.5" y="1.8" width="4" height="2" fill="#ddd" stroke="#111" stroke-width="0.8"/><circle cx="9.6" cy="9.2" r="3.3" fill="#8a8a8a" stroke="#ddd" stroke-width="0.8"/><circle cx="9.6" cy="9.2" r="1.8" fill="#7a2a2a"/><circle cx="10.3" cy="9.8" r="0.9" fill="#4a6fb0"/><circle cx="4" cy="5" r="0.7" fill="#e02020"/></svg>
<svg style="left:1272px;top:148px" width="11" height="11" viewBox="0 0 11 11"><circle cx="5.5" cy="5.5" r="4.3" fill="#f2f2f2" stroke="#222" stroke-width="0.9"/><path d="M3 5.5H8" stroke="#111" stroke-width="1.4"/><path d="M5.5 3V8" stroke="#111" stroke-width="1.4"/></svg>
<svg style="left:1286px;top:146px" width="17" height="16" viewBox="0 0 17 16"><defs><radialGradient id="gg1286_146" cx="0.35" cy="0.3" r="0.75"><stop offset="0" stop-color="#fff"/><stop offset="1" stop-color="#8f8f8f"/></radialGradient></defs><path d="M6.5 3L11.5 0.8L16 2.6V9L11.5 11.5L6.5 9.4Z" fill="#dcdcdc" stroke="#1e1e1e" stroke-width="0.9"/><path d="M11.5 4.6V11.5L16 9V2.6Z" fill="#9c9c9c"/><path d="M6.5 3L11.5 4.6L16 2.6L11.5 0.8Z" fill="#f6f6f6"/><circle cx="4.8" cy="11" r="4" fill="url(#gg1286_146)" stroke="#1e1e1e" stroke-width="0.9"/></svg>
<span class="t " style="left:1305px;top:149px;letter-spacing:-0.62px;">mountains_04</span>
<div class="" style="left:1386px;top:148px;width:2px;height:12px;background:#4a4a4a;"></div>
<svg style="left:1398.5px;top:147px" width="14" height="15" viewBox="0 0 15 16"><path d="M2 2.5H13L7.5 13.5Z" fill="none" stroke="#7c5326" stroke-width="2.5"/><path d="M2 2.5H13L7.5 13.5Z" fill="none" stroke="#cf9a62" stroke-width="1.4"/><circle cx="2" cy="2.5" r="1.3" fill="#f4d9b4"/><circle cx="13" cy="2.5" r="1.3" fill="#f4d9b4"/><circle cx="7.5" cy="13.5" r="1.3" fill="#f4d9b4"/></svg>
<svg style="left:1527px;top:147px" width="15" height="15" viewBox="0 0 15 15"><path d="M0.8 7.5C3.5 2.8 11.5 2.8 14.2 7.5C11.5 12 3.5 12 0.8 7.5Z" fill="#f2f2f2" stroke="#2a2a2a" stroke-width="0.9"/><circle cx="7.5" cy="7.2" r="2.7" fill="#5b5b5b"/><circle cx="7.5" cy="7.2" r="1.3" fill="#151515"/></svg>
<svg style="left:1548px;top:146px" width="14" height="16" viewBox="0 0 14 16"><path d="M3 1L3 12.5L5.8 9.8L8 14.5L10 13.6L7.8 9L11.5 9Z" fill="#fff" stroke="#111" stroke-width="0.9" stroke-linejoin="round"/></svg>
<svg style="left:1566px;top:148px" width="14" height="13" viewBox="0 0 16 15"><rect x="1" y="3.5" width="14" height="10.5" fill="#e8e8e8" stroke="#111" stroke-width="1"/><rect x="1.5" y="6" width="13" height="6.2" fill="#2a2a2a"/><rect x="2.5" y="1.8" width="4" height="2" fill="#ddd" stroke="#111" stroke-width="0.8"/><circle cx="9.6" cy="9.2" r="3.3" fill="#8a8a8a" stroke="#ddd" stroke-width="0.8"/><circle cx="9.6" cy="9.2" r="1.8" fill="#7a2a2a"/><circle cx="10.3" cy="9.8" r="0.9" fill="#4a6fb0"/><circle cx="4" cy="5" r="0.7" fill="#e02020"/></svg>
<svg style="left:1272px;top:168px" width="11" height="11" viewBox="0 0 11 11"><circle cx="5.5" cy="5.5" r="4.3" fill="#f2f2f2" stroke="#222" stroke-width="0.9"/><path d="M3 5.5H8" stroke="#111" stroke-width="1.4"/><path d="M5.5 3V8" stroke="#111" stroke-width="1.4"/></svg>
<svg style="left:1286px;top:166px" width="17" height="16" viewBox="0 0 17 16"><defs><radialGradient id="gg1286_166" cx="0.35" cy="0.3" r="0.75"><stop offset="0" stop-color="#fff"/><stop offset="1" stop-color="#8f8f8f"/></radialGradient></defs><path d="M6.5 3L11.5 0.8L16 2.6V9L11.5 11.5L6.5 9.4Z" fill="#dcdcdc" stroke="#1e1e1e" stroke-width="0.9"/><path d="M11.5 4.6V11.5L16 9V2.6Z" fill="#9c9c9c"/><path d="M6.5 3L11.5 4.6L16 2.6L11.5 0.8Z" fill="#f6f6f6"/><circle cx="4.8" cy="11" r="4" fill="url(#gg1286_166)" stroke="#1e1e1e" stroke-width="0.9"/></svg>
<span class="t " style="left:1305px;top:169px;letter-spacing:-0.62px;">mountains_05</span>
<div class="" style="left:1386px;top:168px;width:2px;height:12px;background:#4a4a4a;"></div>
<svg style="left:1398.5px;top:167px" width="14" height="15" viewBox="0 0 15 16"><path d="M2 2.5H13L7.5 13.5Z" fill="none" stroke="#7c5326" stroke-width="2.5"/><path d="M2 2.5H13L7.5 13.5Z" fill="none" stroke="#cf9a62" stroke-width="1.4"/><circle cx="2" cy="2.5" r="1.3" fill="#f4d9b4"/><circle cx="13" cy="2.5" r="1.3" fill="#f4d9b4"/><circle cx="7.5" cy="13.5" r="1.3" fill="#f4d9b4"/></svg>
<svg style="left:1527px;top:167px" width="15" height="15" viewBox="0 0 15 15"><path d="M0.8 7.5C3.5 2.8 11.5 2.8 14.2 7.5C11.5 12 3.5 12 0.8 7.5Z" fill="#f2f2f2" stroke="#2a2a2a" stroke-width="0.9"/><circle cx="7.5" cy="7.2" r="2.7" fill="#5b5b5b"/><circle cx="7.5" cy="7.2" r="1.3" fill="#151515"/></svg>
<svg style="left:1548px;top:166px" width="14" height="16" viewBox="0 0 14 16"><path d="M3 1L3 12.5L5.8 9.8L8 14.5L10 13.6L7.8 9L11.5 9Z" fill="#fff" stroke="#111" stroke-width="0.9" stroke-linejoin="round"/></svg>
<svg style="left:1566px;top:168px" width="14" height="13" viewBox="0 0 16 15"><rect x="1" y="3.5" width="14" height="10.5" fill="#e8e8e8" stroke="#111" stroke-width="1"/><rect x="1.5" y="6" width="13" height="6.2" fill="#2a2a2a"/><rect x="2.5" y="1.8" width="4" height="2" fill="#ddd" stroke="#111" stroke-width="0.8"/><circle cx="9.6" cy="9.2" r="3.3" fill="#8a8a8a" stroke="#ddd" stroke-width="0.8"/><circle cx="9.6" cy="9.2" r="1.8" fill="#7a2a2a"/><circle cx="10.3" cy="9.8" r="0.9" fill="#4a6fb0"/><circle cx="4" cy="5" r="0.7" fill="#e02020"/></svg>
<svg style="left:1272px;top:188px" width="11" height="11" viewBox="0 0 11 11"><circle cx="5.5" cy="5.5" r="4.3" fill="#f2f2f2" stroke="#222" stroke-width="0.9"/><path d="M3 5.5H8" stroke="#111" stroke-width="1.4"/><path d="M5.5 3V8" stroke="#111" stroke-width="1.4"/></svg>
<svg style="left:1286px;top:186px" width="17" height="16" viewBox="0 0 17 16"><defs><radialGradient id="gg1286_186" cx="0.35" cy="0.3" r="0.75"><stop offset="0" stop-color="#fff"/><stop offset="1" stop-color="#8f8f8f"/></radialGradient></defs><path d="M6.5 3L11.5 0.8L16 2.6V9L11.5 11.5L6.5 9.4Z" fill="#dcdcdc" stroke="#1e1e1e" stroke-width="0.9"/><path d="M11.5 4.6V11.5L16 9V2.6Z" fill="#9c9c9c"/><path d="M6.5 3L11.5 4.6L16 2.6L11.5 0.8Z" fill="#f6f6f6"/><circle cx="4.8" cy="11" r="4" fill="url(#gg1286_186)" stroke="#1e1e1e" stroke-width="0.9"/></svg>
<span class="t " style="left:1305px;top:189px;letter-spacing:-0.62px;">mountains_06</span>
<div class="" style="left:1386px;top:188px;width:2px;height:12px;background:#4a4a4a;"></div>
<svg style="left:1398.5px;top:187px" width="14" height="15" viewBox="0 0 15 16"><path d="M2 2.5H13L7.5 13.5Z" fill="none" stroke="#7c5326" stroke-width="2.5"/><path d="M2 2.5H13L7.5 13.5Z" fill="none" stroke="#cf9a62" stroke-width="1.4"/><circle cx="2" cy="2.5" r="1.3" fill="#f4d9b4"/><circle cx="13" cy="2.5" r="1.3" fill="#f4d9b4"/><circle cx="7.5" cy="13.5" r="1.3" fill="#f4d9b4"/></svg>
<svg style="left:1527px;top:187px" width="15" height="15" viewBox="0 0 15 15"><path d="M0.8 7.5C3.5 2.8 11.5 2.8 14.2 7.5C11.5 12 3.5 12 0.8 7.5Z" fill="#f2f2f2" stroke="#2a2a2a" stroke-width="0.9"/><circle cx="7.5" cy="7.2" r="2.7" fill="#5b5b5b"/><circle cx="7.5" cy="7.2" r="1.3" fill="#151515"/></svg>
<svg style="left:1548px;top:186px" width="14" height="16" viewBox="0 0 14 16"><path d="M3 1L3 12.5L5.8 9.8L8 14.5L10 13.6L7.8 9L11.5 9Z" fill="#fff" stroke="#111" stroke-width="0.9" stroke-linejoin="round"/></svg>
<svg style="left:1566px;top:188px" width="14" height="13" viewBox="0 0 16 15"><rect x="1" y="3.5" width="14" height="10.5" fill="#e8e8e8" stroke="#111" stroke-width="1"/><rect x="1.5" y="6" width="13" height="6.2" fill="#2a2a2a"/><rect x="2.5" y="1.8" width="4" height="2" fill="#ddd" stroke="#111" stroke-width="0.8"/><circle cx="9.6" cy="9.2" r="3.3" fill="#8a8a8a" stroke="#ddd" stroke-width="0.8"/><circle cx="9.6" cy="9.2" r="1.8" fill="#7a2a2a"/><circle cx="10.3" cy="9.8" r="0.9" fill="#4a6fb0"/><circle cx="4" cy="5" r="0.7" fill="#e02020"/></svg>
<div class="" style="left:1265px;top:52px;width:335px;height:156px;overflow:hidden;"><svg style="left:21px;top:150px" width="17" height="16" viewBox="0 0 17 16"><defs><radialGradient id="gg21_150" cx="0.35" cy="0.3" r="0.75"><stop offset="0" stop-color="#fff"/><stop offset="1" stop-color="#8f8f8f"/></radialGradient></defs><path d="M6.5 3L11.5 0.8L16 2.6V9L11.5 11.5L6.5 9.4Z" fill="#dcdcdc" stroke="#1e1e1e" stroke-width="0.9"/><path d="M11.5 4.6V11.5L16 9V2.6Z" fill="#9c9c9c"/><path d="M6.5 3L11.5 4.6L16 2.6L11.5 0.8Z" fill="#f6f6f6"/><circle cx="4.8" cy="11" r="4" fill="url(#gg21_150)" stroke="#1e1e1e" stroke-width="0.9"/></svg><svg style="left:133px;top:151px" width="14" height="15" viewBox="0 0 15 16"><path d="M2 2.5H13L7.5 13.5Z" fill="none" stroke="#7c5326" stroke-width="2.5"/><path d="M2 2.5H13L7.5 13.5Z" fill="none" stroke="#cf9a62" stroke-width="1.4"/><circle cx="2" cy="2.5" r="1.3" fill="#f4d9b4"/><circle cx="13" cy="2.5" r="1.3" fill="#f4d9b4"/><circle cx="7.5" cy="13.5" r="1.3" fill="#f4d9b4"/></svg></div>
<svg style="left:1264px;top:195px;" width="13" height="13" viewBox="0 0 12 12"><path d="M0 1L11 12M0 4L8 12M0 7L5 12" stroke="#2b2b2b" stroke-width="1.1" fill="none"/><path d="M0 2.3L9.7 12M0 5.3L6.7 12M0 8.3L3.7 12" stroke="#a0a0a0" stroke-width="1.1" fill="none"/></svg>
<div class="hdr" style="left:1265px;top:27px;width:335px;height:25px;background:#6e6e6e;"></div>
<div class="btn dk emb" style="left:1273px;top:30px;width:30px;height:20px;"></div>
<svg style="left:1277px;top:32px" width="16" height="16" viewBox="0 0 16 16"><path d="M3.5 4V13.5H8M3.5 8.5H8" stroke="#9ab7e6" stroke-width="1" fill="none"/><rect x="1.5" y="1.5" width="7" height="2.8" fill="#f5a33d" stroke="#7a4a10" stroke-width="0.6"/><rect x="7.5" y="7.2" width="6.5" height="2.6" fill="#fff" stroke="#333" stroke-width="0.6"/><rect x="7.5" y="12" width="6.5" height="2.6" fill="#fff" stroke="#333" stroke-width="0.6"/></svg>
<svg style="left:1294px;top:34px" width="7" height="13" viewBox="0 0 7 13"><path d="M3.5 0.5L6.5 5H0.5Z M3.5 12.5L6.5 8H0.5Z" fill="#a8a8a8"/></svg>
<span class="t " style="left:1316px;top:35px;letter-spacing:-0.5px;">View</span>
<span class="t " style="left:1360px;top:35px;letter-spacing:-0.5px;">Search</span>
<div class="btn dk emb" style="left:1407px;top:30px;width:119px;height:20px;"></div>
<span class="t w" style="left:1415px;top:35px;letter-spacing:-0.5px;">Groups</span>
<svg style="left:1516px;top:34px" width="7" height="13" viewBox="0 0 7 13"><path d="M3.5 0.5L6.5 5H0.5Z M3.5 12.5L6.5 8H0.5Z" fill="#a8a8a8"/></svg>
<div class="btn emb" style="left:1531px;top:30px;width:80px;height:20px;background:linear-gradient(#9a9a9a,#b6b6b6);border-radius:4px;"></div>
<svg style="left:1535px;top:32px" width="16" height="16" viewBox="0 0 16 16"><path d="M2 14L7 8.5" stroke="#5a2c08" stroke-width="3.2" stroke-linecap="round"/><path d="M2 14L7 8.5" stroke="#d68a4a" stroke-width="1.8" stroke-linecap="round"/><circle cx="10" cy="5.5" r="4.4" fill="#d9d2d2" stroke="#333" stroke-width="1"/><circle cx="9" cy="4.5" r="1.6" fill="#fff"/></svg>
<svg style="left:1587px;top:27px;transform:rotate(180deg);" width="13" height="13" viewBox="0 0 12 12"><path d="M0 1L11 12M0 4L8 12M0 7L5 12" stroke="#2b2b2b" stroke-width="1.1" fill="none"/><path d="M0 2.3L9.7 12M0 5.3L6.7 12M0 8.3L3.7 12" stroke="#a0a0a0" stroke-width="1.1" fill="none"/></svg>
<div class="" style="left:1264px;top:208px;width:336px;height:1px;background:#0a0a0a;"></div>
<div class="hdr" style="left:1265px;top:209px;width:335px;height:26px;"></div>
<div class="" style="left:1265px;top:235px;width:335px;height:815px;background:#727272;"></div>
<div class="btn dk emb" style="left:1273px;top:212px;width:30px;height:20px;"></div>
<svg style="left:1277px;top:214px" width="16" height="16" viewBox="0 0 16 16"><rect x="1.5" y="2.5" width="13" height="4" rx="1.5" fill="#555" stroke="#eee" stroke-width="1"/><rect x="8.5" y="3" width="5.5" height="3" rx="1.2" fill="#ddd"/><rect x="1.5" y="9.5" width="13" height="4.4" rx="1.5" fill="#fff" stroke="#222" stroke-width="0.8"/><rect x="5" y="10.6" width="6" height="2.2" fill="#bbb"/><path d="M4.2 10.4L2.8 11.7L4.2 13M11.8 10.4L13.2 11.7L11.8 13" fill="#111"/></svg>
<svg style="left:1294px;top:216px" width="7" height="13" viewBox="0 0 7 13"><path d="M3.5 0.5L6.5 5H0.5Z M3.5 12.5L6.5 8H0.5Z" fill="#a8a8a8"/></svg>
<div class="btn dk emb" style="left:1310px;top:212px;width:241px;height:20px;border-radius:4px;background:linear-gradient(#5a5a5a,#444);"></div>
<div class="" style="left:1330px;top:213px;width:1px;height:18px;background:#2a2a2a;"></div>
<div class="" style="left:1350px;top:213px;width:1px;height:18px;background:#2a2a2a;"></div>
<div class="" style="left:1370px;top:213px;width:1px;height:18px;background:#2a2a2a;"></div>
<div class="" style="left:1390px;top:213px;width:1px;height:18px;background:#2a2a2a;"></div>
<div class="" style="left:1410px;top:213px;width:1px;height:18px;background:#2a2a2a;"></div>
<div class="" style="left:1430px;top:213px;width:1px;height:18px;background:#2a2a2a;"></div>
<div class="" style="left:1450px;top:213px;width:1px;height:18px;background:#2a2a2a;"></div>
<div class="" style="left:1470px;top:213px;width:1px;height:18px;background:#2a2a2a;"></div>
<div class="" style="left:1490px;top:213px;width:1px;height:18px;background:#2a2a2a;"></div>
<div class="" style="left:1510px;top:213px;width:1px;height:18px;background:#2a2a2a;"></div>
<div class="" style="left:1530px;top:213px;width:1px;height:18px;background:#2a2a2a;"></div>
<div class="" style="left:1430px;top:213px;width:21px;height:18px;background:linear-gradient(#4e74b0,#5d8bd2);border-left:1px solid #1e1e1e;border-right:1px solid #1e1e1e;"></div>
<svg style="opacity:0.62;left:1313px;top:215px" width="16" height="15" viewBox="0 0 16 15"><rect x="1" y="3.5" width="14" height="10.5" fill="#e8e8e8" stroke="#111" stroke-width="1"/><rect x="1.5" y="6" width="13" height="6.2" fill="#2a2a2a"/><rect x="2.5" y="1.8" width="4" height="2" fill="#ddd" stroke="#111" stroke-width="0.8"/><circle cx="9.6" cy="9.2" r="3.3" fill="#8a8a8a" stroke="#ddd" stroke-width="0.8"/><circle cx="9.6" cy="9.2" r="1.8" fill="#7a2a2a"/><circle cx="10.3" cy="9.8" r="0.9" fill="#4a6fb0"/><circle cx="4" cy="5" r="0.7" fill="#e02020"/></svg>
<svg style="opacity:0.62;left:1332px;top:214px" width="16" height="16" viewBox="0 0 16 16"><rect x="4" y="4" width="10" height="10" fill="#c9c2a4" stroke="#333" stroke-width="0.8" transform="rotate(8 9 9)"/><rect x="1.5" y="1.5" width="10.5" height="10.5" fill="#dcdcdc" stroke="#222" stroke-width="0.9"/><rect x="3" y="3" width="7.5" height="7.5" fill="#7a93b8"/><rect x="6.5" y="3.5" width="2.6" height="4.5" rx="1" fill="#3d6bb5"/><circle cx="5.2" cy="8.6" r="1.6" fill="#eee"/></svg>
<svg style="opacity:0.62;left:1352px;top:214px" width="16" height="16" viewBox="0 0 16 16"><defs><radialGradient id="sg1352" cx="0.35" cy="0.35" r="0.7"><stop offset="0" stop-color="#fff"/><stop offset="1" stop-color="#777"/></radialGradient></defs><rect x="8.5" y="2.5" width="5.5" height="9.5" rx="2.2" fill="#4f7fc4" stroke="#1c3256" stroke-width="0.8"/><ellipse cx="11.2" cy="3.6" rx="2.4" ry="1.1" fill="#d5e3f6"/><circle cx="6" cy="11" r="3.8" fill="url(#sg1352)" stroke="#222" stroke-width="0.8"/><circle cx="3" cy="3.2" r="2.2" fill="#e9f07a" stroke="#7f8a2a" stroke-width="0.7"/></svg>
<svg style="opacity:0.62;left:1372px;top:214px" width="16" height="16" viewBox="0 0 16 16"><circle cx="8" cy="8" r="6.5" fill="#4a7fc9" stroke="#1e2f4d" stroke-width="0.9"/><path d="M4 4.5C6 3.5 8 4.5 7 6.5C6 8 4.5 7.5 3.5 9C2.5 7.5 2.8 5.5 4 4.5ZM9 8.5C11 7.5 13.5 8.5 12.5 10.5C11.5 12.5 9.5 12.5 8.5 11C8 10 8.3 9 9 8.5Z" fill="#4b8a3c"/><ellipse cx="6" cy="4.5" rx="3" ry="1.6" fill="#fff" opacity="0.45"/></svg>
<svg style="opacity:0.62;left:1393px;top:214px" width="15" height="16" viewBox="0 0 15 16"><path d="M1.2 3.6L7.5 1L13.8 3.6V11L7.5 14.6L1.2 11Z" fill="#f4a850" stroke="#6e3a06" stroke-width="0.9"/><path d="M7.5 6.2V14.6L13.8 11V3.6Z" fill="#c9741a"/><path d="M1.2 3.6L7.5 6.2L13.8 3.6L7.5 1Z" fill="#fbe0bb"/></svg>
<svg style="opacity:0.62;left:1412px;top:214px" width="16" height="16" viewBox="0 0 16 16"><rect x="1.5" y="7" width="8" height="5" rx="2.5" fill="none" stroke="#222" stroke-width="3" transform="rotate(-40 5.5 9.5)"/><rect x="1.5" y="7" width="8" height="5" rx="2.5" fill="none" stroke="#ddd" stroke-width="1.6" transform="rotate(-40 5.5 9.5)"/><rect x="6.5" y="3" width="8" height="5" rx="2.5" fill="none" stroke="#222" stroke-width="3" transform="rotate(-40 10.5 5.5)"/><rect x="6.5" y="3" width="8" height="5" rx="2.5" fill="none" stroke="#ddd" stroke-width="1.6" transform="rotate(-40 10.5 5.5)"/></svg>
<svg style="left:1433px;top:214px" width="16" height="16" viewBox="0 0 16 16"><path d="M2.2 13.8L8.2 7.4C7.4 5.2 8.6 2.6 11 2C12 1.8 12.6 1.9 13.2 2.1L10.7 4.7L11.3 6.3L13 6.8L15.4 4.4C15.9 6 15.4 7.9 14 8.9C12.9 9.7 11.6 9.8 10.4 9.4L4.3 15.8C3.2 16.8 1.2 15 2.2 13.8Z" fill="#e8eefb" stroke="#1d3558" stroke-width="0.9" transform="translate(-0.8,-1)"/></svg>
<svg style="opacity:0.62;left:1453px;top:214px" width="15" height="16" viewBox="0 0 15 16"><path d="M2 2.5H13L7.5 13.5Z" fill="none" stroke="#d0d0d0" stroke-width="1"/><circle cx="2" cy="2.5" r="1.5" fill="#fff" stroke="#222" stroke-width="0.6"/><circle cx="13" cy="2.5" r="1.5" fill="#fff" stroke="#222" stroke-width="0.6"/><circle cx="7.5" cy="13.5" r="1.5" fill="#fff" stroke="#222" stroke-width="0.6"/></svg>
<svg style="opacity:0.62;left:1473px;top:215px" width="14" height="14" viewBox="0 0 14 14"><defs><radialGradient id="sp1473_215" cx="0.35" cy="0.3" r="0.8"><stop offset="0" stop-color="#d8c8c8"/><stop offset="1" stop-color="#5a3a3a"/></radialGradient></defs><circle cx="7" cy="7" r="6" fill="url(#sp1473_215)" stroke="#222" stroke-width="0.8"/></svg>
<svg style="opacity:0.62;left:1492px;top:214px" width="16" height="16" viewBox="0 0 16 16"><rect x="1.5" y="1.5" width="13" height="13" fill="#e8e0e0" stroke="#333" stroke-width="0.8"/><path d="M2 2h3v3h-3zM8 2h3v3h-3zM5 5h3v3h-3zM11 5h3v3h-3zM2 8h3v3h-3zM8 8h3v3h-3zM5 11h3v3h-3zM11 11h3v3h-3z" fill="#a03030"/></svg>
<svg style="opacity:0.62;left:1512px;top:214px" width="16" height="16" viewBox="0 0 16 16"><path d="M5 1V9M1 5H9M11 7V15M7 11H15M12 1V5M10 3H14M3 11V15M1 13H5" stroke="#f1e9a0" stroke-width="1.3"/><circle cx="5" cy="5" r="1.3" fill="#fff"/><circle cx="11" cy="11" r="1.3" fill="#fff"/></svg>
<svg style="opacity:0.62;left:1532px;top:214px" width="16" height="16" viewBox="0 0 16 16"><path d="M2 7L6 12L11 3" fill="none" stroke="#3c5f9e" stroke-width="2.6"/><circle cx="12" cy="4" r="2.6" fill="#e4e4e4" stroke="#444" stroke-width="0.7"/></svg>
<svg style="left:1587px;top:209px;transform:rotate(180deg);" width="13" height="13" viewBox="0 0 12 12"><path d="M0 1L11 12M0 4L8 12M0 7L5 12" stroke="#2b2b2b" stroke-width="1.1" fill="none"/><path d="M0 2.3L9.7 12M0 5.3L6.7 12M0 8.3L3.7 12" stroke="#a0a0a0" stroke-width="1.1" fill="none"/></svg>
<svg style="left:1274px;top:245px" width="17" height="17" viewBox="0 0 17 17"><path d="M1 16L6.5 9.5" stroke="#222" stroke-width="2.4"/><path d="M1 16L6.5 9.5" stroke="#eee" stroke-width="1.2"/><path d="M4.5 7.5L9.8 12.8L11.3 10.4L15.5 6.2L11 1.8L7 6Z" fill="#e8e8e8" stroke="#222" stroke-width="0.9" stroke-linejoin="round"/></svg>
<svg style="left:1297px;top:245px" width="16" height="16" viewBox="0 0 16 16"><defs><radialGradient id="sg1297" cx="0.35" cy="0.35" r="0.7"><stop offset="0" stop-color="#fff"/><stop offset="1" stop-color="#777"/></radialGradient></defs><rect x="8.5" y="2.5" width="5.5" height="9.5" rx="2.2" fill="#4f7fc4" stroke="#1c3256" stroke-width="0.8"/><ellipse cx="11.2" cy="3.6" rx="2.4" ry="1.1" fill="#d5e3f6"/><circle cx="6" cy="11" r="3.8" fill="url(#sg1297)" stroke="#222" stroke-width="0.8"/><circle cx="3" cy="3.2" r="2.2" fill="#e9f07a" stroke="#7f8a2a" stroke-width="0.7"/></svg>
<svg style="left:1317px;top:250px" width="5" height="7" viewBox="0 0 5 7"><path d="M1 0.5L4 3.5L1 6.5Z" fill="#3a3a3a"/></svg>
<svg style="left:1337px;top:245px" width="15" height="16" viewBox="0 0 15 16"><path d="M1.2 3.6L7.5 1L13.8 3.6V11L7.5 14.6L1.2 11Z" fill="#f4a850" stroke="#6e3a06" stroke-width="0.9"/><path d="M7.5 6.2V14.6L13.8 11V3.6Z" fill="#c9741a"/><path d="M1.2 3.6L7.5 6.2L13.8 3.6L7.5 1Z" fill="#fbe0bb"/></svg>
<span class="t " style="left:1356px;top:248px;letter-spacing:-0.55px;">Plane.001</span>
<div class="btn dk emb" style="left:1272px;top:279px;width:320px;height:20px;background:linear-gradient(#555,#2f2f2f);border-radius:5px;"></div>
<span class="t w" style="left:1279px;top:284px;letter-spacing:-0.65px;">Add Modifier</span>
<svg style="left:1582px;top:283px" width="7" height="13" viewBox="0 0 7 13"><path d="M3.5 0.5L6.5 5H0.5Z M3.5 12.5L6.5 8H0.5Z" fill="#a8a8a8"/></svg>
<div class="btn" style="left:1272px;top:304px;width:320px;height:263px;background:#808080;border-color:#2c2c2c;border-radius:5px;"></div>
<div class="" style="left:1273px;top:336px;width:318px;height:1px;background:#2c2c2c;"></div>
<svg style="left:1281px;top:317px" width="13" height="10" viewBox="0 0 13 10"><path d="M1 1.5L6.5 8.5L12 1.5Z" fill="#f0f0f0" stroke="#222" stroke-width="0.9" stroke-linejoin="round"/></svg>
<svg style="left:1310px;top:314px" width="15" height="16" viewBox="0 0 15 16"><path d="M1.2 3.6L7.5 1L13.8 3.6V11L7.5 14.6L1.2 11Z" fill="#c9c9c9" stroke="#444" stroke-width="0.9"/><path d="M7.5 6.2V14.6L13.8 11V3.6Z" fill="#3f7ed0"/><path d="M1.2 3.6L7.5 6.2L13.8 3.6L7.5 1Z" fill="#f2f2f2"/></svg>
<div class="btn tx emb" style="left:1333px;top:312px;width:60px;height:20px;border-radius:4px;background:linear-gradient(#a0a0a0,#b8b8b8);"></div>
<span class="t " style="left:1341px;top:317px;letter-spacing:-0.55px;">Solidify</span>
<div class="btn emb" style="left:1401px;top:312px;width:102px;height:20px;border-radius:4px;background:linear-gradient(#535353,#5f5f5f);overflow:hidden;"><div style="left:78px;top:0;width:23px;height:18px;background:linear-gradient(#a4a4a4,#8c8c8c);"></div><div class="sep" style="left:22px;top:0;height:18px"></div><div class="sep" style="left:50px;top:0;height:18px"></div><div class="sep" style="left:78px;top:0;height:18px"></div></div>
<svg style="left:1405px;top:315px" width="16" height="15" viewBox="0 0 16 15"><rect x="1" y="3.5" width="14" height="10.5" fill="#e8e8e8" stroke="#111" stroke-width="1"/><rect x="1.5" y="6" width="13" height="6.2" fill="#2a2a2a"/><rect x="2.5" y="1.8" width="4" height="2" fill="#ddd" stroke="#111" stroke-width="0.8"/><circle cx="9.6" cy="9.2" r="3.3" fill="#8a8a8a" stroke="#ddd" stroke-width="0.8"/><circle cx="9.6" cy="9.2" r="1.8" fill="#7a2a2a"/><circle cx="10.3" cy="9.8" r="0.9" fill="#4a6fb0"/><circle cx="4" cy="5" r="0.7" fill="#e02020"/></svg>
<svg style="left:1431px;top:315px" width="15" height="15" viewBox="0 0 15 15"><path d="M0.8 7.5C3.5 2.8 11.5 2.8 14.2 7.5C11.5 12 3.5 12 0.8 7.5Z" fill="#f2f2f2" stroke="#2a2a2a" stroke-width="0.9"/><circle cx="7.5" cy="7.2" r="2.7" fill="#5b5b5b"/><circle cx="7.5" cy="7.2" r="1.3" fill="#151515"/></svg>
<svg style="left:1458px;top:314px" width="16" height="16" viewBox="0 0 16 16"><path d="M5 3L10 1.5L14 3V11L9.5 13.5L5 11Z" fill="#bdbdbd" stroke="#555" stroke-width="0.8"/><path d="M3 3.5H9V13H3Z" fill="none" stroke="#5b2f00" stroke-width="1.2"/><g fill="#f6c27a" stroke="#5b2f00" stroke-width="0.8"><rect x="1.5" y="2" width="3" height="3"/><rect x="7.5" y="2" width="3" height="3"/><rect x="1.5" y="11" width="3" height="3"/><rect x="7.5" y="11.5" width="3" height="3"/><rect x="7.5" y="6" width="3" height="3"/></g></svg>
<svg style="left:1484px;top:314px" width="15" height="16" viewBox="0 0 15 16"><path d="M2 2.5H13L7.5 13.5Z" fill="none" stroke="#6a6a6a" stroke-width="1"/><circle cx="2" cy="2.5" r="1.5" fill="#ddd" stroke="#555" stroke-width="0.6"/><circle cx="13" cy="2.5" r="1.5" fill="#ddd" stroke="#555" stroke-width="0.6"/><circle cx="7.5" cy="13.5" r="1.5" fill="#ddd" stroke="#555" stroke-width="0.6"/></svg>
<div class="btn lt emb" style="left:1511px;top:312px;width:48px;height:20px;border-radius:4px;"></div>
<div class="sep" style="left:1534px;top:313px;width:1px;height:18px;"></div>
<svg style="left:1516px;top:317px" width="13" height="10" viewBox="0 0 13 10"><path d="M1 8.5L6.5 1.5L12 8.5Z" fill="#f0f0f0" stroke="#222" stroke-width="0.9" stroke-linejoin="round"/></svg>
<svg style="left:1540px;top:317px" width="13" height="10" viewBox="0 0 13 10"><path d="M1 1.5L6.5 8.5L12 1.5Z" fill="#f0f0f0" stroke="#222" stroke-width="0.9" stroke-linejoin="round"/></svg>
<svg style="left:1571px;top:316px" width="13" height="13" viewBox="0 0 13 13"><path d="M2 2L11 11M11 2L2 11" stroke="#1a1a1a" stroke-width="4" stroke-linecap="round"/><path d="M2.3 2.3L10.7 10.7M10.7 2.3L2.3 10.7" stroke="#f2f2f2" stroke-width="2"/></svg>
<div class="btn lt emb" style="left:1277px;top:345px;width:151px;height:20px;border-radius:4px;"></div>
<span class="t " style="left:1251.5px;width:200px;text-align:center;top:350px;letter-spacing:-0.55px;">Apply</span>
<div class="btn lt emb" style="left:1436px;top:345px;width:151px;height:20px;border-radius:4px;"></div>
<span class="t " style="left:1410.5px;width:200px;text-align:center;top:350px;letter-spacing:-0.55px;">Copy</span>
<div class="btn num emb" style="left:1277px;top:373px;width:151px;height:20px;background:linear-gradient(#b0b0b0,#c4c4c4);"></div>
<span class="t " style="left:1292px;top:378px;letter-spacing:-0.55px;color:#000;">Thickness:</span>
<span class="t " style="right:188px;top:378px;letter-spacing:-0.3px;color:#000;">0.3000</span>
<svg style="left:1284.5px;top:379px" width="5" height="7" viewBox="0 0 5 7"><path d="M4 0.5L0.8 3.5L4 6.5Z" fill="#6e6e6e"/></svg>
<svg style="left:1415.5px;top:379px" width="5" height="7" viewBox="0 0 5 7"><path d="M1 0.5L4.2 3.5L1 6.5Z" fill="#6e6e6e"/></svg>
<div class="btn num emb" style="left:1436px;top:373px;width:151px;height:20px;background:linear-gradient(#6f6f6f 0,#7e7e7e 100%);"></div>
<span class="t " style="left:1452px;top:378px;letter-spacing:-0.55px;color:#000;">Offset:</span>
<span class="t " style="right:28.5px;top:378px;letter-spacing:-0.3px;color:#000;">1.0000</span>
<div class="btn num emb" style="left:1277px;top:395px;width:151px;height:20px;"></div>
<span class="t " style="left:1291px;top:400px;letter-spacing:-0.55px;color:#000;">Clamp:</span>
<span class="t " style="right:187.5px;top:400px;letter-spacing:-0.3px;color:#000;">0.0000</span>
<div class="" style="left:1278px;top:396px;width:9px;height:18px;background:linear-gradient(#6a6a6a,#808080);border-radius:9px 0 0 9px;"></div>
<div class="chk emb" style="left:1439px;top:398px;width:14px;height:14px;"></div>
<span class="t " style="left:1461px;top:400px;letter-spacing:-0.5px;">Flip Normals</span>
<div class="chk emb" style="left:1439px;top:420px;width:14px;height:14px;"></div>
<span class="t " style="left:1461px;top:422px;letter-spacing:-0.5px;">Even Thickness</span>
<div class="chk emb" style="left:1439px;top:442px;width:14px;height:14px;"></div>
<span class="t " style="left:1461px;top:444px;letter-spacing:-0.5px;">High Quality Normals</span>
<div class="chk emb" style="left:1439px;top:464px;width:14px;height:14px;"></div>
<svg style="left:1441.5px;top:463.5px" width="13" height="11.5" viewBox="0 0 16 14"><path d="M2.5 7.5L6 11.5L13.5 1.5" fill="none" stroke="#111" stroke-width="3.2" stroke-linecap="round"/><path d="M2.5 7.5L6 11.5L13.5 1.5" fill="none" stroke="#fff" stroke-width="1.8" stroke-linecap="round"/></svg>
<span class="t w" style="left:1461px;top:466px;letter-spacing:-0.25px;">Fill Rim</span>
<div class="btn tx emb" style="left:1277px;top:425px;width:131px;height:20px;border-radius:4px 0 0 4px;background:linear-gradient(#9a9a9a,#b4b4b4);"></div>
<svg style="left:1281px;top:428px" width="15" height="14" viewBox="0 0 15 14"><g fill="#fff" stroke="#111" stroke-width="0.9"><rect x="1" y="3" width="3" height="3"/><rect x="5.5" y="0.8" width="3" height="3"/><rect x="5.5" y="5.3" width="3" height="3"/><rect x="1" y="7.6" width="3" height="3"/><rect x="5.5" y="9.9" width="3" height="3"/><rect x="10" y="3" width="3" height="3" stroke="#555"/><rect x="10" y="7.6" width="3" height="3" stroke="#555"/></g></svg>
<div class="btn emb" style="left:1407px;top:425px;width:21px;height:20px;border-radius:0 4px 4px 0;background:linear-gradient(#8d8d8d,#808080);border-color:#4a4a4a;"></div>
<svg style="left:1410px;top:430px" width="15" height="10" viewBox="0 0 15 10"><path d="M1 5H14M4.5 1.5L1 5L4.5 8.5M10.5 1.5L14 5L10.5 8.5" fill="none" stroke="#b8b8b8" stroke-width="1.6"/></svg>
<div class="btn num emb" style="left:1277px;top:447px;width:151px;height:20px;background:linear-gradient(#8a8a8a,#9a9a9a);border-color:#4a4a4a;"></div>
<span class="t " style="left:1291px;top:452px;letter-spacing:-0.55px;color:#4e4e4e;">Factor:</span>
<span class="t " style="right:187.5px;top:452px;letter-spacing:-0.3px;color:#4e4e4e;">0.000</span>
<div class="" style="left:1278px;top:448px;width:9px;height:18px;background:linear-gradient(#7e7e7e,#808080);border-radius:9px 0 0 9px;"></div>
<span class="t " style="left:1284px;top:474px;letter-spacing:-0.55px;">Crease:</span>
<div class="btn num emb" style="left:1277px;top:491px;width:151px;height:20px;"></div>
<span class="t " style="left:1291px;top:496px;letter-spacing:-0.55px;color:#000;">Inner:</span>
<span class="t " style="right:187.5px;top:496px;letter-spacing:-0.3px;color:#000;">0.000</span>
<div class="" style="left:1278px;top:492px;width:9px;height:18px;background:linear-gradient(#6a6a6a,#808080);border-radius:9px 0 0 9px;"></div>
<div class="btn num emb" style="left:1277px;top:513px;width:151px;height:20px;"></div>
<span class="t " style="left:1291px;top:518px;letter-spacing:-0.55px;color:#000;">Outer:</span>
<span class="t " style="right:187.5px;top:518px;letter-spacing:-0.3px;color:#000;">0.000</span>
<div class="" style="left:1278px;top:514px;width:9px;height:18px;background:linear-gradient(#6a6a6a,#808080);border-radius:9px 0 0 9px;"></div>
<div class="btn num emb" style="left:1277px;top:535px;width:151px;height:20px;"></div>
<span class="t " style="left:1291px;top:540px;letter-spacing:-0.55px;color:#000;">Rim:</span>
<span class="t " style="right:187.5px;top:540px;letter-spacing:-0.3px;color:#000;">0.000</span>
<div class="" style="left:1278px;top:536px;width:9px;height:18px;background:linear-gradient(#6a6a6a,#808080);border-radius:9px 0 0 9px;"></div>
<span class="t " style="left:1444px;top:496px;letter-spacing:-0.6px;">Material Index Offset:</span>
<div class="btn num emb" style="left:1436px;top:513px;width:61px;height:20px;border-radius:10px 0 0 10px;"></div>
<span class="t " style="left:1451px;top:518px;letter-spacing:-0.55px;color:#000;"></span>
<span class="t " style="right:119px;top:518px;letter-spacing:-0.3px;color:#000;">0</span>
<svg style="left:1443.5px;top:519px" width="5" height="7" viewBox="0 0 5 7"><path d="M4 0.5L0.8 3.5L4 6.5Z" fill="#6e6e6e"/></svg>
<svg style="left:1484.5px;top:519px" width="5" height="7" viewBox="0 0 5 7"><path d="M1 0.5L4.2 3.5L1 6.5Z" fill="#6e6e6e"/></svg>
<div class="btn num emb" style="left:1496px;top:513px;width:91px;height:20px;border-radius:0 10px 10px 0;"></div>
<span class="t " style="left:1511px;top:518px;letter-spacing:-0.55px;color:#000;">Rim:</span>
<span class="t " style="right:29px;top:518px;letter-spacing:-0.3px;color:#000;">0</span>
<svg style="left:1503.5px;top:519px" width="5" height="7" viewBox="0 0 5 7"><path d="M4 0.5L0.8 3.5L4 6.5Z" fill="#6e6e6e"/></svg>
<svg style="left:1574.5px;top:519px" width="5" height="7" viewBox="0 0 5 7"><path d="M1 0.5L4.2 3.5L1 6.5Z" fill="#6e6e6e"/></svg>
<div class="hdr" style="left:0px;top:1024px;width:1263px;height:26px;background:linear-gradient(#808080 0,#7e7e7e 1px,#696969 1px);"></div>
<svg style="left:0px;top:1037px;" width="13" height="13" viewBox="0 0 12 12"><path d="M0 1L11 12M0 4L8 12M0 7L5 12" stroke="#2b2b2b" stroke-width="1.1" fill="none"/><path d="M0 2.3L9.7 12M0 5.3L6.7 12M0 8.3L3.7 12" stroke="#a0a0a0" stroke-width="1.1" fill="none"/></svg>
<svg style="left:1264px;top:1037px;" width="13" height="13" viewBox="0 0 12 12"><path d="M0 1L11 12M0 4L8 12M0 7L5 12" stroke="#2b2b2b" stroke-width="1.1" fill="none"/><path d="M0 2.3L9.7 12M0 5.3L6.7 12M0 8.3L3.7 12" stroke="#a0a0a0" stroke-width="1.1" fill="none"/></svg>
<svg style="left:1249px;top:27px;transform:rotate(180deg);" width="13" height="13" viewBox="0 0 12 12"><path d="M0 1L11 12M0 4L8 12M0 7L5 12" stroke="#2b2b2b" stroke-width="1.1" fill="none"/><path d="M0 2.3L9.7 12M0 5.3L6.7 12M0 8.3L3.7 12" stroke="#a0a0a0" stroke-width="1.1" fill="none"/></svg>
<div class="btn dk emb" style="left:9px;top:1027px;width:29px;height:20px;"></div>
<svg style="left:12px;top:1029px" width="16" height="16" viewBox="0 0 16 16"><path d="M1.5 3.2L8 1.5L14.5 3.2V10.5L8 14.8L1.5 10.5Z" fill="#e8e8e8" stroke="#333" stroke-width="0.8"/><path d="M8 5.2V14.8L14.5 10.5V3.2Z" fill="#8a8a8a"/><path d="M1.5 3.2L8 5.2L14.5 3.2L8 1.5Z" fill="#fafafa"/></svg>
<svg style="left:29px;top:1031px" width="7" height="13" viewBox="0 0 7 13"><path d="M3.5 0.5L6.5 5H0.5Z M3.5 12.5L6.5 8H0.5Z" fill="#a8a8a8"/></svg>
<span class="t " style="left:52px;top:1032px;letter-spacing:-0.5px;">View</span>
<span class="t " style="left:96px;top:1032px;letter-spacing:-0.5px;">Select</span>
<span class="t " style="left:147px;top:1032px;letter-spacing:-0.5px;">Add</span>
<span class="t " style="left:186px;top:1032px;letter-spacing:-0.5px;">Object</span>
<div class="btn dk emb" style="left:233px;top:1027px;width:111px;height:20px;"></div>
<svg style="left:238px;top:1029px" width="15" height="16" viewBox="0 0 15 16"><path d="M1.2 3.6L7.5 1L13.8 3.6V11L7.5 14.6L1.2 11Z" fill="#f4a850" stroke="#6e3a06" stroke-width="0.9"/><path d="M7.5 6.2V14.6L13.8 11V3.6Z" fill="#c9741a"/><path d="M1.2 3.6L7.5 6.2L13.8 3.6L7.5 1Z" fill="#fbe0bb"/></svg>
<span class="t w" style="left:256px;top:1032px;letter-spacing:-0.5px;">Object Mode</span>
<svg style="left:334px;top:1031px" width="7" height="13" viewBox="0 0 7 13"><path d="M3.5 0.5L6.5 5H0.5Z M3.5 12.5L6.5 8H0.5Z" fill="#a8a8a8"/></svg>
<div class="btn dk emb" style="left:351px;top:1027px;width:33px;height:20px;"></div>
<svg style="left:355px;top:1030px" width="14" height="14" viewBox="0 0 14 14"><defs><radialGradient id="sp355_1030" cx="0.35" cy="0.3" r="0.8"><stop offset="0" stop-color="#fff"/><stop offset="1" stop-color="#aaa"/></radialGradient></defs><circle cx="7" cy="7" r="6" fill="url(#sp355_1030)" stroke="#222" stroke-width="0.8"/></svg>
<svg style="left:373px;top:1031px" width="7" height="13" viewBox="0 0 7 13"><path d="M3.5 0.5L6.5 5H0.5Z M3.5 12.5L6.5 8H0.5Z" fill="#a8a8a8"/></svg>
<div class="btn dk emb" style="left:391px;top:1027px;width:34px;height:20px;border-radius:4px 0 0 4px;"></div>
<svg style="left:394px;top:1029px" width="16" height="16" viewBox="0 0 16 16"><circle cx="6" cy="6" r="4.5" fill="#f4f4f4" stroke="#222" stroke-width="0.8"/><circle cx="10.5" cy="10.5" r="4.5" fill="#dfe7f5" stroke="#222" stroke-width="0.8"/><circle cx="8.2" cy="8.2" r="1.6" fill="#3d6bb5"/></svg>
<svg style="left:414px;top:1031px" width="7" height="13" viewBox="0 0 7 13"><path d="M3.5 0.5L6.5 5H0.5Z M3.5 12.5L6.5 8H0.5Z" fill="#a8a8a8"/></svg>
<div class="btn lt emb" style="left:424px;top:1027px;width:20px;height:20px;border-radius:0 4px 4px 0;"></div>
<svg style="left:426px;top:1029px" width="16" height="16" viewBox="0 0 16 16"><g fill="#fff" stroke="#222" stroke-width="0.7"><circle cx="3" cy="3.5" r="1.8"/><circle cx="8" cy="3.5" r="1.8"/><circle cx="13" cy="3.5" r="1.8"/></g><path d="M1.5 11H14.5M4.5 8L1.5 11L4.5 14M11.5 8L14.5 11L11.5 14" fill="none" stroke="#222" stroke-width="2.6"/><path d="M1.5 11H14.5M4.5 8L1.5 11L4.5 14M11.5 8L14.5 11L11.5 14" fill="none" stroke="#fff" stroke-width="1.2"/></svg>
<div class="btn lt emb" style="left:450px;top:1027px;width:152px;height:20px;overflow:hidden;"><div style="left:19px;top:0;width:20px;height:18px;background:linear-gradient(#4e74b0,#5d8bd2);"></div><div class="sep" style="left:19px;top:0;height:18px"></div><div class="sep" style="left:39px;top:0;height:18px"></div><div class="sep" style="left:58px;top:0;height:18px"></div><div class="sep" style="left:78px;top:0;height:18px"></div><div style="left:79px;top:0;width:72px;height:18px;background:linear-gradient(#565656,#3a3a3a);"></div></div>
<svg style="left:453px;top:1029px" width="16" height="16" viewBox="0 0 16 16"><path d="M8 9V1" stroke="#2f5fd0" stroke-width="2.2"/><path d="M8 9L1.5 14" stroke="#d02f2f" stroke-width="2.2"/><path d="M8 9L14.5 14" stroke="#37b34a" stroke-width="2.2"/><circle cx="8" cy="9" r="1.5" fill="#fff"/></svg>
<svg style="left:472px;top:1029px" width="16" height="16" viewBox="0 0 16 16"><path d="M2 14L11 5" stroke="#16305e" stroke-width="3.6" stroke-linecap="round"/><path d="M2 14L11 5" stroke="#cfe0ff" stroke-width="1.8" stroke-linecap="round"/><path d="M7.5 2H14V8.5Z" fill="#cfe0ff" stroke="#16305e" stroke-width="1"/></svg>
<svg style="left:492px;top:1029px" width="16" height="16" viewBox="0 0 16 16"><path d="M2 14C2 7 7 2 14 2" fill="none" stroke="#1d3558" stroke-width="3"/><path d="M2 14C2 7 7 2 14 2" fill="none" stroke="#6f9fe0" stroke-width="1.5"/></svg>
<svg style="left:511px;top:1029px" width="16" height="16" viewBox="0 0 16 16"><path d="M2 14L9 7" stroke="#1d3558" stroke-width="3.2"/><path d="M2 14L9 7" stroke="#6f9fe0" stroke-width="1.6"/><rect x="8" y="2" width="6" height="6" fill="#6f9fe0" stroke="#1d3558" stroke-width="1"/></svg>
<span class="t w" style="left:537px;top:1032px;letter-spacing:-0.5px;">Local</span>
<svg style="left:592px;top:1031px" width="7" height="13" viewBox="0 0 7 13"><path d="M3.5 0.5L6.5 5H0.5Z M3.5 12.5L6.5 8H0.5Z" fill="#a8a8a8"/></svg>
<div class="btn lt emb" style="left:607px;top:1027px;width:50px;height:20px;border-radius:4px;background:linear-gradient(#a0a0a0,#8a8a8a);"></div>
<div class="" style="left:608px;top:1037px;width:48px;height:1px;background:#4a4a4a;"></div>
<div class="" style="left:617px;top:1028px;width:1px;height:18px;background:#4a4a4a;"></div>
<div class="" style="left:627px;top:1028px;width:1px;height:18px;background:#4a4a4a;"></div>
<div class="" style="left:637px;top:1028px;width:1px;height:18px;background:#4a4a4a;"></div>
<div class="" style="left:647px;top:1028px;width:1px;height:18px;background:#4a4a4a;"></div>
<svg style="left:609.5px;top:1029px" width="6" height="6" viewBox="0 0 6 6"><circle cx="3" cy="3" r="2.2" fill="#9a9a9a" stroke="#555" stroke-width="0.8"/></svg>
<svg style="left:619.3px;top:1029px" width="6" height="6" viewBox="0 0 6 6"><circle cx="3" cy="3" r="2.2" fill="#9a9a9a" stroke="#555" stroke-width="0.8"/></svg>
<svg style="left:629.1px;top:1029px" width="6" height="6" viewBox="0 0 6 6"><circle cx="3" cy="3" r="2.2" fill="#9a9a9a" stroke="#555" stroke-width="0.8"/></svg>
<svg style="left:638.9px;top:1029px" width="6" height="6" viewBox="0 0 6 6"><circle cx="3" cy="3" r="2.2" fill="#9a9a9a" stroke="#555" stroke-width="0.8"/></svg>
<svg style="left:648.7px;top:1029px" width="6" height="6" viewBox="0 0 6 6"><circle cx="3" cy="3" r="2.2" fill="#9a9a9a" stroke="#555" stroke-width="0.8"/></svg>
<svg style="left:609.5px;top:1039px" width="6" height="6" viewBox="0 0 6 6"><circle cx="3" cy="3" r="2.2" fill="#9a9a9a" stroke="#555" stroke-width="0.8"/></svg>
<svg style="left:619.3px;top:1039px" width="6" height="6" viewBox="0 0 6 6"><circle cx="3" cy="3" r="2.2" fill="#9a9a9a" stroke="#555" stroke-width="0.8"/></svg>
<svg style="left:629.1px;top:1039px" width="6" height="6" viewBox="0 0 6 6"><circle cx="3" cy="3" r="2.2" fill="#9a9a9a" stroke="#555" stroke-width="0.8"/></svg>
<svg style="left:638.9px;top:1039px" width="6" height="6" viewBox="0 0 6 6"><circle cx="3" cy="3" r="2.2" fill="#9a9a9a" stroke="#555" stroke-width="0.8"/></svg>
<svg style="left:648.7px;top:1039px" width="6" height="6" viewBox="0 0 6 6"><circle cx="3" cy="3" r="2.2" fill="#9a9a9a" stroke="#555" stroke-width="0.8"/></svg>
<div class="btn lt emb" style="left:662px;top:1027px;width:50px;height:20px;border-radius:4px;background:linear-gradient(#a0a0a0,#8a8a8a);"></div>
<div class="" style="left:663px;top:1037px;width:48px;height:1px;background:#4a4a4a;"></div>
<div class="" style="left:672px;top:1028px;width:1px;height:18px;background:#4a4a4a;"></div>
<div class="" style="left:682px;top:1028px;width:1px;height:18px;background:#4a4a4a;"></div>
<div class="" style="left:692px;top:1028px;width:1px;height:18px;background:#4a4a4a;"></div>
<div class="" style="left:702px;top:1028px;width:1px;height:18px;background:#4a4a4a;"></div>
<svg style="left:664.5px;top:1029px" width="6" height="6" viewBox="0 0 6 6"><circle cx="3" cy="3" r="2.2" fill="#9a9a9a" stroke="#555" stroke-width="0.8"/></svg>
<svg style="left:664.5px;top:1039px" width="6" height="6" viewBox="0 0 6 6"><circle cx="3" cy="3" r="2.2" fill="#f0a040" stroke="#555" stroke-width="0.8"/></svg>
<svg style="left:703.7px;top:1039px" width="6" height="6" viewBox="0 0 6 6"><circle cx="3" cy="3" r="2.2" fill="#9a9a9a" stroke="#555" stroke-width="0.8"/></svg>
<div class="" style="left:608px;top:1028px;width:9.7px;height:9px;background:rgba(0,0,0,0.0);"></div>
<div class="btn lt emb" style="left:718px;top:1027px;width:20px;height:20px;"></div>
<svg style="left:720px;top:1029px" width="16" height="16" viewBox="0 0 16 16"><rect x="1.5" y="2.5" width="10" height="10" fill="#ddd" stroke="#222" stroke-width="0.9"/><rect x="3" y="4" width="7" height="7" fill="#888"/><rect x="10" y="8.5" width="5" height="5.5" rx="1" fill="#eee" stroke="#222" stroke-width="0.8"/><path d="M11 8.5V6.5C11 4.8 14 4.8 14 6.5V8.5" fill="none" stroke="#222" stroke-width="1.1"/></svg>
<div class="btn lt emb" style="left:743px;top:1027px;width:20px;height:20px;"></div>
<svg style="left:745px;top:1029px" width="16" height="16" viewBox="0 0 16 16"><circle cx="8" cy="8" r="5.8" fill="none" stroke="#c8c8c8" stroke-width="1.6"/><circle cx="8" cy="8" r="2.6" fill="#b4b4b4" stroke="#888" stroke-width="0.8"/></svg>
<div class="btn dk emb" style="left:768px;top:1027px;width:145px;height:20px;overflow:hidden;"><div style="left:0;top:0;width:19px;height:18px;background:linear-gradient(#a7a7a7,#8b8b8b);"></div><div class="sep" style="left:19px;top:0;height:18px"></div><div class="sep" style="left:54px;top:0;height:18px"></div><div class="sep" style="left:124px;top:0;height:18px"></div><div style="left:125px;top:0;width:19px;height:18px;background:linear-gradient(#a7a7a7,#8b8b8b);"></div></div>
<svg style="left:770px;top:1029px" width="16" height="16" viewBox="0 0 16 16"><g transform="rotate(45 8 8)"><path d="M4 13V6.5A4 4 0 0 1 12 6.5V13" fill="none" stroke="#7a7a7a" stroke-width="4"/><path d="M4 13V6.5A4 4 0 0 1 12 6.5V13" fill="none" stroke="#cdcdcd" stroke-width="2.2"/></g></svg>
<svg style="left:790px;top:1029px" width="16" height="16" viewBox="0 0 16 16"><path d="M5 4.5L10 3L14 4.5V11L10 13.5L5 11Z" fill="#e0e0e0" stroke="#333" stroke-width="0.8"/><path d="M10 6.5V13.5L14 11V4.5Z" fill="#8a8a8a"/><g fill="#fff" stroke="#222" stroke-width="0.6"><rect x="1" y="3" width="2.6" height="2.6"/><rect x="1" y="7" width="2.6" height="2.6"/><rect x="1" y="11" width="2.6" height="2.6"/></g></svg>
<svg style="left:812px;top:1031px" width="7" height="13" viewBox="0 0 7 13"><path d="M3.5 0.5L6.5 5H0.5Z M3.5 12.5L6.5 8H0.5Z" fill="#a8a8a8"/></svg>
<span class="t w" style="left:829px;top:1032px;letter-spacing:-0.5px;">Closest</span>
<svg style="left:882px;top:1031px" width="7" height="13" viewBox="0 0 7 13"><path d="M3.5 0.5L6.5 5H0.5Z M3.5 12.5L6.5 8H0.5Z" fill="#a8a8a8"/></svg>
<svg style="left:895px;top:1029px" width="16" height="16" viewBox="0 0 16 16"><circle cx="7" cy="9.5" r="5" fill="#e8e8e8" stroke="#333" stroke-width="0.9"/><circle cx="7" cy="9.5" r="2" fill="#7aa0dd"/><path d="M7 9.5L14 1.5" stroke="#1d3558" stroke-width="2.6"/><path d="M7 9.5L14 1.5" stroke="#6f9fe0" stroke-width="1.2"/></svg>
<div class="btn lt emb" style="left:919px;top:1027px;width:39px;height:20px;"></div>
<div class="sep" style="left:938px;top:1028px;width:1px;height:18px;"></div>
<svg style="left:921px;top:1030px" width="16" height="15" viewBox="0 0 16 15"><rect x="1" y="3.5" width="14" height="10.5" fill="#e8e8e8" stroke="#111" stroke-width="1"/><rect x="1.5" y="6" width="13" height="6.2" fill="#2a2a2a"/><rect x="2.5" y="1.8" width="4" height="2" fill="#ddd" stroke="#111" stroke-width="0.8"/><circle cx="9.6" cy="9.2" r="3.3" fill="#8a8a8a" stroke="#ddd" stroke-width="0.8"/><circle cx="9.6" cy="9.2" r="1.8" fill="#7a2a2a"/><circle cx="10.3" cy="9.8" r="0.9" fill="#4a6fb0"/><circle cx="4" cy="5" r="0.7" fill="#e02020"/></svg>
<svg style="left:930px;top:1027px" width="8" height="8" viewBox="0 0 8 8"><path d="M4 0V8M0 4H8" stroke="#f7ef9a" stroke-width="1.4"/></svg>
<svg style="left:941px;top:1029px" width="16" height="16" viewBox="0 0 16 16"><rect x="1.5" y="6.5" width="13" height="8" fill="#2c2c2c" stroke="#111" stroke-width="0.8"/><path d="M1.5 6.5L13.5 1.5L14.5 4L2.5 9Z" fill="#eee" stroke="#111" stroke-width="0.8"/><path d="M4.5 5.3L6.5 7.4M8 3.9L10 6M11.5 2.4L13.5 4.5" stroke="#111" stroke-width="1.4"/><rect x="3" y="9.5" width="10" height="1.3" fill="#ddd"/><rect x="3" y="12" width="10" height="1.3" fill="#ddd"/></svg>
<span class="t w" style="left:20px;top:38px;letter-spacing:-0.6px;">User Persp</span>
<span class="t w" style="left:70px;top:1004px;letter-spacing:-0.4px;">(1) Plane.001</span>
<div class="" style="left:0px;top:49px;width:12px;height:13px;background:#444;border-radius:0 3px 3px 0;"></div>
<svg style="left:1px;top:51px" width="9" height="9" viewBox="0 0 9 9"><path d="M4.5 1V8M1 4.5H8" stroke="#767676" stroke-width="2"/></svg>
<div class="" style="left:1250px;top:49px;width:12px;height:13px;background:#444;border-radius:3px 0 0 3px;"></div>
<svg style="left:1252px;top:51px" width="9" height="9" viewBox="0 0 9 9"><path d="M4.5 1V8M1 4.5H8" stroke="#767676" stroke-width="2"/></svg>
<svg style="left:18px;top:966px" width="48" height="48" viewBox="0 0 48 48"><path d="M8 31.5L31 39.4" stroke="#dc0000" stroke-width="1.6"/><path d="M8 31.5L17 14" stroke="#00dc00" stroke-width="1.6"/><path d="M8 31.5V17" stroke="#0000dc" stroke-width="1.8"/><text x="33" y="39" font-size="11" fill="#b01414" font-family="DejaVu Sans, sans-serif">x</text><text x="19" y="12" font-size="11" fill="#14a014" font-family="DejaVu Sans, sans-serif">y</text><text x="9" y="15" font-size="11" fill="#1414c8" font-family="DejaVu Sans, sans-serif">z</text></svg>
<svg style="left:648px;top:355px" width="9" height="9" viewBox="0 0 9 9"><circle cx="4.5" cy="4.5" r="2.8" fill="#f5a842" stroke="#1a1a1a" stroke-width="1"/></svg>
</body></html>
